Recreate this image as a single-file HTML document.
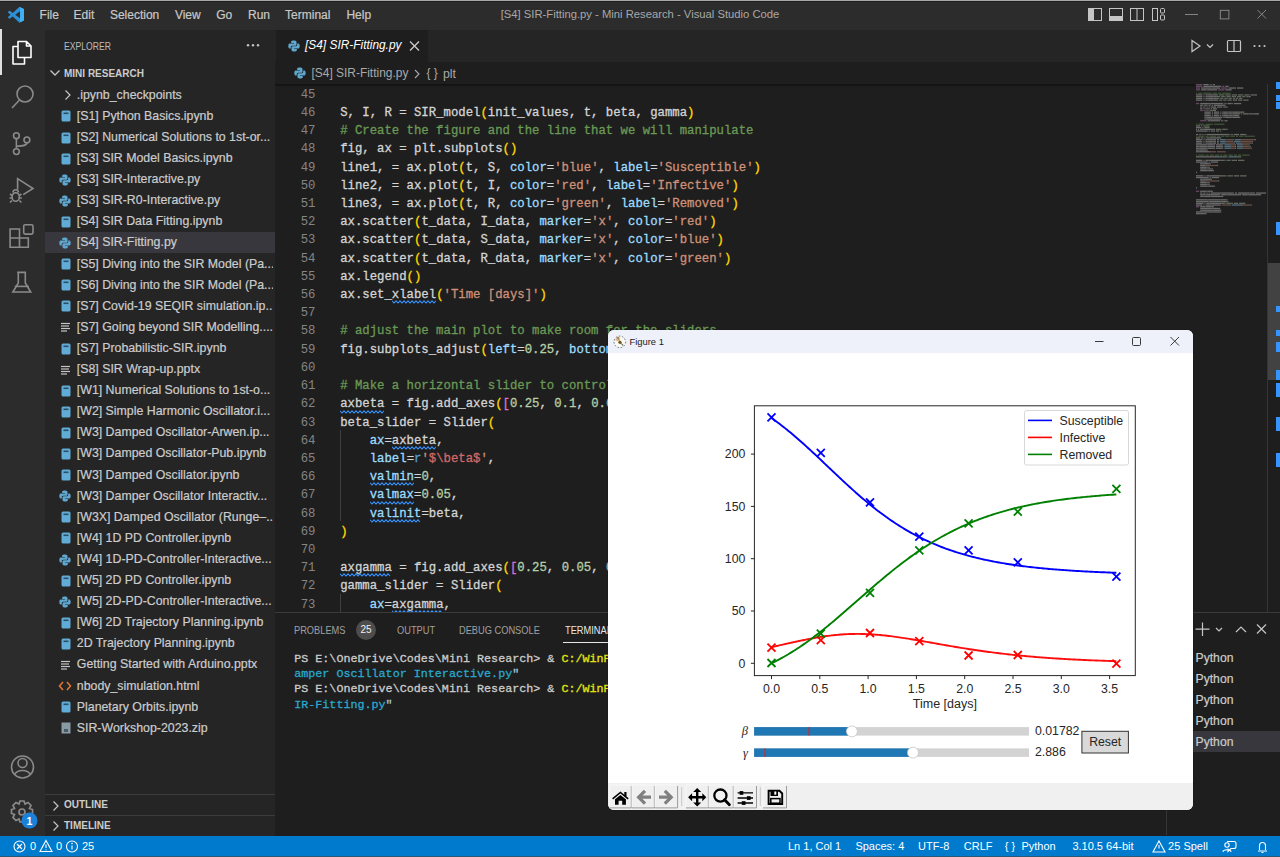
<!DOCTYPE html><html><head><meta charset="utf-8"><style>
*{box-sizing:border-box;margin:0;padding:0}
html,body{width:1280px;height:857px;overflow:hidden;background:#1e1e1e;font-family:"Liberation Sans",sans-serif}
.a{position:absolute}
.t{position:absolute;white-space:pre;line-height:1}
.mono{font-family:"Liberation Mono",monospace}
.b3{-webkit-text-stroke:0.3px currentColor}
.b2{-webkit-text-stroke:0.2px currentColor}
</style></head><body>
<div class="a" style="left:0;top:0;width:1280px;height:30px;background:#2c2c2c"></div>
<div class="a" style="left:0;top:0;width:1280px;height:1px;background:#a8a8a8"></div>
<div class="a" style="left:0;top:1px;width:1280px;height:1px;background:#1e1e1e;border-radius:4px 4px 0 0"></div>
<svg class="a" style="left:8px;top:7px" width="16" height="15.5" viewBox="0 0 100 100" preserveAspectRatio="none">
<path d="M96.46 10.8 L75.86 0.87 C73.48 -0.28 70.63 0.2 68.76 2.07 L29.36 38 L12.2 24.98 C10.6 23.77 8.36 23.87 6.88 25.22 L1.37 30.23 C-0.44 31.88 -0.44 34.74 1.36 36.39 L16.24 49.97 L1.36 63.55 C-0.44 65.2 -0.44 68.06 1.37 69.71 L6.88 74.72 C8.36 76.07 10.6 76.17 12.2 74.96 L29.36 61.94 L68.76 97.87 C70.63 99.74 73.48 100.22 75.86 99.07 L96.46 89.14 C98.62 88.1 100 85.91 100 83.51 V16.43 C100 14.03 98.62 11.84 96.46 10.8 Z M75.01 72.7 L45.11 49.97 L75.01 27.24 Z" fill="#2d8fd6" fill-rule="evenodd"/>
<path d="M75.86 0.87 L96.46 10.8 C98.62 11.84 100 14.03 100 16.43 V83.51 C100 85.91 98.62 88.1 96.46 89.14 L75.86 99.07 C73.48 100.22 70.63 99.74 68.76 97.87 C71 99 75 98 75 94 V6 C75 2 71 1 68.76 2.07 C70.63 0.2 73.48 -0.28 75.86 0.87 Z" fill="#3fb0f2"/>
</svg>
<div class="t b2" style="left:39.6px;top:8.5px;font-size:12px;color:#c8c8c8">File</div>
<div class="t b2" style="left:73.60000000000001px;top:8.5px;font-size:12px;color:#c8c8c8">Edit</div>
<div class="t b2" style="left:109.9px;top:8.5px;font-size:12px;color:#c8c8c8">Selection</div>
<div class="t b2" style="left:174.89999999999998px;top:8.5px;font-size:12px;color:#c8c8c8">View</div>
<div class="t b2" style="left:216.2px;top:8.5px;font-size:12px;color:#c8c8c8">Go</div>
<div class="t b2" style="left:248.0px;top:8.5px;font-size:12px;color:#c8c8c8">Run</div>
<div class="t b2" style="left:285.09999999999997px;top:8.5px;font-size:12px;color:#c8c8c8">Terminal</div>
<div class="t b2" style="left:346.4px;top:8.5px;font-size:12px;color:#c8c8c8">Help</div>
<div class="t" style="left:0;width:1280px;text-align:center;top:9px;font-size:11.25px;color:#a8a8a8">[S4] SIR-Fitting.py - Mini Research - Visual Studio Code</div>
<svg class="a" style="left:1080px;top:0" width="200" height="30">
<g fill="none" stroke="#c5c5c5" stroke-width="1">
<rect x="8.5" y="8.5" width="13" height="12"/><rect x="9" y="9" width="5" height="11" fill="#c5c5c5" stroke="none"/>
<rect x="29.5" y="8.5" width="13" height="12"/><rect x="30" y="16" width="12" height="4" fill="#c5c5c5" stroke="none"/>
<rect x="50.5" y="8.5" width="13" height="12"/><line x1="57" y1="9" x2="57" y2="20"/>
<rect x="72.5" y="8.5" width="5" height="12"/><rect x="80.5" y="8.5" width="4" height="4.5" rx="1"/><rect x="80.5" y="15" width="4" height="5" rx="1"/>
<g stroke="#8e8e8e" stroke-width="0.9"><line x1="105" y1="14.5" x2="118" y2="14.5"/>
<rect x="140.3" y="10.3" width="8.6" height="8.6"/>
<line x1="177.5" y1="10" x2="186" y2="18.5"/><line x1="186" y1="10" x2="177.5" y2="18.5"/></g>
</g></svg>
<div class="a" style="left:0;top:30px;width:45px;height:806px;background:#2c2c2c"></div>
<div class="a" style="left:0;top:29px;width:1.6px;height:46px;background:#e0e0e0"></div>
<svg class="a" style="left:0;top:30px" width="45" height="806">
<g fill="none" stroke="#ffffff" stroke-width="1.6" stroke-linejoin="round">
<path d="M18 11.5 H26.5 L31 16 V27.5 H18 Z M26.5 11.5 V16 H31"/>
<path d="M18 16.5 H13 V34 H24.5 V27.5"/>
</g>
<g fill="none" stroke="#8a8a8a" stroke-width="1.6">
<circle cx="25" cy="64" r="8"/><line x1="19.5" y1="70" x2="12" y2="78"/>
<circle cx="16.4" cy="105.7" r="2.9"/><circle cx="16.4" cy="121.6" r="2.9"/><circle cx="26.9" cy="109.9" r="2.9"/>
<path d="M16.4 108.6 V118.7 M26.9 112.8 C26.9 115.5 24 116 16.4 116.2"/>
<path d="M17.6 159.4 V148.7 L33 158.5 L23.2 164.6"/><ellipse cx="15.7" cy="166.9" rx="3.6" ry="4.3"/><path d="M13 162.5 a2.7 2.7 0 0 1 5.4 0 M12 165.5 l-2 -1.5 M19.4 165.5 l2 -1.5 M12 168 h-2.5 M19.4 168 h2.5 M12 170.5 l-2 2 M19.4 170.5 l2 2"/>
<path d="M10.1 199 H19.5 V208 H28.3 V217.2 H10.1 Z M10.1 208 H19.5 V217.2"/><rect x="23.7" y="194.8" width="9.3" height="9.3" rx="1.5"/>
<path d="M17.1 242.4 H26 M18.3 242.4 V253 L12.9 262 H30.7 L25.3 253 V242.4"/><path d="M14.8 256.4 H28.8"/>
<circle cx="22.5" cy="737" r="11"/><circle cx="22.5" cy="733" r="4.5"/><path d="M14.5 745 C17 739 28 739 30.5 745"/>
</g>
<g fill="none" stroke="#8a8a8a" stroke-width="1.7">
<circle cx="22" cy="782" r="3"/>
<path d="M20 771 h4 l1 3 l3 -1.5 l3 3 l-1.5 3 l3 1 v4 l-3 1 l1.5 3 l-3 3 l-3 -1.5 l-1 3 h-4 l-1 -3 l-3 1.5 l-3 -3 l1.5 -3 l-3 -1 v-4 l3 -1 l-1.5 -3 l3 -3 l3 1.5 z"/>
</g>
<circle cx="29.5" cy="790.5" r="8" fill="#1b80d8"/>
<text x="29.5" y="794.5" font-size="10.5" fill="#fff" text-anchor="middle" font-family="Liberation Sans" font-weight="700">1</text>
</svg>
<div class="a" style="left:45px;top:30px;width:230px;height:806px;background:#252526"></div>
<div class="t" style="left:64px;top:41.5px;font-size:10.3px;color:#bbbbbb;transform:scaleX(0.84);transform-origin:0 0">EXPLORER</div>
<svg class="a" style="left:240px;top:40px" width="22" height="10"><g fill="#c5c5c5"><circle cx="8" cy="5.3" r="1.2"/><circle cx="13" cy="5.3" r="1.2"/><circle cx="18" cy="5.3" r="1.2"/></g></svg>
<svg class="a" style="left:48px;top:66px" width="14" height="14"><path d="M2.5 4.5 L7 9 L11.5 4.5" fill="none" stroke="#c5c5c5" stroke-width="1.3"/></svg>
<div class="t" style="left:64px;top:68.5px;font-size:10px;font-weight:700;color:#cccccc">MINI RESEARCH</div>
<svg class="a" style="left:62px;top:89.3px" width="12" height="12"><path d="M3.5 1.5 L8 6 L3.5 10.5" fill="none" stroke="#c5c5c5" stroke-width="1.2"/></svg>
<div class="t b2" style="left:76.8px;top:86.7px;padding:2px 0;font-size:12.35px;color:#cccccc;width:196px;overflow:hidden">.ipynb_checkpoints</div>
<svg class="a" style="left:60.7px;top:110.4px" width="11" height="12"><rect x="0.5" y="0.5" width="9" height="11" rx="1.5" fill="#61acd6"/><rect x="2.5" y="2.5" width="5" height="1.6" fill="#2b4f66"/></svg>
<div class="t b2" style="left:76.8px;top:107.8px;padding:2px 0;font-size:12.35px;color:#cccccc;width:196px;overflow:hidden">[S1] Python Basics.ipynb</div>
<svg class="a" style="left:60.7px;top:131.5px" width="11" height="12"><rect x="0.5" y="0.5" width="9" height="11" rx="1.5" fill="#61acd6"/><rect x="2.5" y="2.5" width="5" height="1.6" fill="#2b4f66"/></svg>
<div class="t b2" style="left:76.8px;top:128.9px;padding:2px 0;font-size:12.35px;color:#cccccc;width:196px;overflow:hidden">[S2] Numerical Solutions to 1st-or...</div>
<svg class="a" style="left:60.7px;top:152.6px" width="11" height="12"><rect x="0.5" y="0.5" width="9" height="11" rx="1.5" fill="#61acd6"/><rect x="2.5" y="2.5" width="5" height="1.6" fill="#2b4f66"/></svg>
<div class="t b2" style="left:76.8px;top:150.0px;padding:2px 0;font-size:12.35px;color:#cccccc;width:196px;overflow:hidden">[S3] SIR Model Basics.ipynb</div>
<svg class="a" style="left:59px;top:173.7px" width="12" height="12"><g fill="#5fa7cf"><path d="M5.8 0.5 C3 0.5 3.2 1.7 3.2 1.7 V3 H6 V3.5 H2 C2 3.5 0.3 3.3 0.3 6 C0.3 8.7 1.8 8.6 1.8 8.6 H2.8 V7.3 C2.8 7.3 2.7 5.8 4.3 5.8 H7 C7 5.8 8.5 5.8 8.5 4.4 V2 C8.5 2 8.7 0.5 5.8 0.5 Z"/><path d="M6.2 11.5 C9 11.5 8.8 10.3 8.8 10.3 V9 H6 V8.5 H10 C10 8.5 11.7 8.7 11.7 6 C11.7 3.3 10.2 3.4 10.2 3.4 H9.2 V4.7 C9.2 4.7 9.3 6.2 7.7 6.2 H5 C5 6.2 3.5 6.2 3.5 7.6 V10 C3.5 10 3.3 11.5 6.2 11.5 Z"/></g></svg>
<div class="t b2" style="left:76.8px;top:171.1px;padding:2px 0;font-size:12.35px;color:#cccccc;width:196px;overflow:hidden">[S3] SIR-Interactive.py</div>
<svg class="a" style="left:59px;top:194.8px" width="12" height="12"><g fill="#5fa7cf"><path d="M5.8 0.5 C3 0.5 3.2 1.7 3.2 1.7 V3 H6 V3.5 H2 C2 3.5 0.3 3.3 0.3 6 C0.3 8.7 1.8 8.6 1.8 8.6 H2.8 V7.3 C2.8 7.3 2.7 5.8 4.3 5.8 H7 C7 5.8 8.5 5.8 8.5 4.4 V2 C8.5 2 8.7 0.5 5.8 0.5 Z"/><path d="M6.2 11.5 C9 11.5 8.8 10.3 8.8 10.3 V9 H6 V8.5 H10 C10 8.5 11.7 8.7 11.7 6 C11.7 3.3 10.2 3.4 10.2 3.4 H9.2 V4.7 C9.2 4.7 9.3 6.2 7.7 6.2 H5 C5 6.2 3.5 6.2 3.5 7.6 V10 C3.5 10 3.3 11.5 6.2 11.5 Z"/></g></svg>
<div class="t b2" style="left:76.8px;top:192.2px;padding:2px 0;font-size:12.35px;color:#cccccc;width:196px;overflow:hidden">[S3] SIR-R0-Interactive.py</div>
<svg class="a" style="left:60.7px;top:215.9px" width="11" height="12"><rect x="0.5" y="0.5" width="9" height="11" rx="1.5" fill="#61acd6"/><rect x="2.5" y="2.5" width="5" height="1.6" fill="#2b4f66"/></svg>
<div class="t b2" style="left:76.8px;top:213.3px;padding:2px 0;font-size:12.35px;color:#cccccc;width:196px;overflow:hidden">[S4] SIR Data Fitting.ipynb</div>
<div class="a" style="left:45px;top:232.4px;width:230px;height:21.1px;background:#37373d"></div>
<svg class="a" style="left:59px;top:237.0px" width="12" height="12"><g fill="#5fa7cf"><path d="M5.8 0.5 C3 0.5 3.2 1.7 3.2 1.7 V3 H6 V3.5 H2 C2 3.5 0.3 3.3 0.3 6 C0.3 8.7 1.8 8.6 1.8 8.6 H2.8 V7.3 C2.8 7.3 2.7 5.8 4.3 5.8 H7 C7 5.8 8.5 5.8 8.5 4.4 V2 C8.5 2 8.7 0.5 5.8 0.5 Z"/><path d="M6.2 11.5 C9 11.5 8.8 10.3 8.8 10.3 V9 H6 V8.5 H10 C10 8.5 11.7 8.7 11.7 6 C11.7 3.3 10.2 3.4 10.2 3.4 H9.2 V4.7 C9.2 4.7 9.3 6.2 7.7 6.2 H5 C5 6.2 3.5 6.2 3.5 7.6 V10 C3.5 10 3.3 11.5 6.2 11.5 Z"/></g></svg>
<div class="t b2" style="left:76.8px;top:234.4px;padding:2px 0;font-size:12.35px;color:#cccccc;width:196px;overflow:hidden">[S4] SIR-Fitting.py</div>
<svg class="a" style="left:60.7px;top:258.1px" width="11" height="12"><rect x="0.5" y="0.5" width="9" height="11" rx="1.5" fill="#61acd6"/><rect x="2.5" y="2.5" width="5" height="1.6" fill="#2b4f66"/></svg>
<div class="t b2" style="left:76.8px;top:255.5px;padding:2px 0;font-size:12.35px;color:#cccccc;width:196px;overflow:hidden">[S5] Diving into the SIR Model (Pa...</div>
<svg class="a" style="left:60.7px;top:279.2px" width="11" height="12"><rect x="0.5" y="0.5" width="9" height="11" rx="1.5" fill="#61acd6"/><rect x="2.5" y="2.5" width="5" height="1.6" fill="#2b4f66"/></svg>
<div class="t b2" style="left:76.8px;top:276.6px;padding:2px 0;font-size:12.35px;color:#cccccc;width:196px;overflow:hidden">[S6] Diving into the SIR Model (Pa...</div>
<svg class="a" style="left:60.7px;top:300.3px" width="11" height="12"><rect x="0.5" y="0.5" width="9" height="11" rx="1.5" fill="#61acd6"/><rect x="2.5" y="2.5" width="5" height="1.6" fill="#2b4f66"/></svg>
<div class="t b2" style="left:76.8px;top:297.7px;padding:2px 0;font-size:12.35px;color:#cccccc;width:196px;overflow:hidden">[S7] Covid-19 SEQIR simulation.ip...</div>
<svg class="a" style="left:60px;top:321.4px" width="12" height="12"><g stroke="#c5c5c5" stroke-width="1.2"><line x1="1" y1="2.5" x2="10" y2="2.5"/><line x1="1" y1="5" x2="9" y2="5"/><line x1="1" y1="7.5" x2="10" y2="7.5"/><line x1="1" y1="10" x2="7" y2="10"/></g></svg>
<div class="t b2" style="left:76.8px;top:318.8px;padding:2px 0;font-size:12.35px;color:#cccccc;width:196px;overflow:hidden">[S7] Going beyond SIR Modelling....</div>
<svg class="a" style="left:60.7px;top:342.5px" width="11" height="12"><rect x="0.5" y="0.5" width="9" height="11" rx="1.5" fill="#61acd6"/><rect x="2.5" y="2.5" width="5" height="1.6" fill="#2b4f66"/></svg>
<div class="t b2" style="left:76.8px;top:339.9px;padding:2px 0;font-size:12.35px;color:#cccccc;width:196px;overflow:hidden">[S7] Probabilistic-SIR.ipynb</div>
<svg class="a" style="left:60px;top:363.6px" width="12" height="12"><g stroke="#c5c5c5" stroke-width="1.2"><line x1="1" y1="2.5" x2="10" y2="2.5"/><line x1="1" y1="5" x2="9" y2="5"/><line x1="1" y1="7.5" x2="10" y2="7.5"/><line x1="1" y1="10" x2="7" y2="10"/></g></svg>
<div class="t b2" style="left:76.8px;top:361.0px;padding:2px 0;font-size:12.35px;color:#cccccc;width:196px;overflow:hidden">[S8] SIR Wrap-up.pptx</div>
<svg class="a" style="left:60.7px;top:384.7px" width="11" height="12"><rect x="0.5" y="0.5" width="9" height="11" rx="1.5" fill="#61acd6"/><rect x="2.5" y="2.5" width="5" height="1.6" fill="#2b4f66"/></svg>
<div class="t b2" style="left:76.8px;top:382.1px;padding:2px 0;font-size:12.35px;color:#cccccc;width:196px;overflow:hidden">[W1] Numerical Solutions to 1st-o...</div>
<svg class="a" style="left:60.7px;top:405.8px" width="11" height="12"><rect x="0.5" y="0.5" width="9" height="11" rx="1.5" fill="#61acd6"/><rect x="2.5" y="2.5" width="5" height="1.6" fill="#2b4f66"/></svg>
<div class="t b2" style="left:76.8px;top:403.2px;padding:2px 0;font-size:12.35px;color:#cccccc;width:196px;overflow:hidden">[W2] Simple Harmonic Oscillator.i...</div>
<svg class="a" style="left:60.7px;top:426.9px" width="11" height="12"><rect x="0.5" y="0.5" width="9" height="11" rx="1.5" fill="#61acd6"/><rect x="2.5" y="2.5" width="5" height="1.6" fill="#2b4f66"/></svg>
<div class="t b2" style="left:76.8px;top:424.3px;padding:2px 0;font-size:12.35px;color:#cccccc;width:196px;overflow:hidden">[W3] Damped Oscillator-Arwen.ip...</div>
<svg class="a" style="left:60.7px;top:448.0px" width="11" height="12"><rect x="0.5" y="0.5" width="9" height="11" rx="1.5" fill="#61acd6"/><rect x="2.5" y="2.5" width="5" height="1.6" fill="#2b4f66"/></svg>
<div class="t b2" style="left:76.8px;top:445.4px;padding:2px 0;font-size:12.35px;color:#cccccc;width:196px;overflow:hidden">[W3] Damped Oscillator-Pub.ipynb</div>
<svg class="a" style="left:60.7px;top:469.1px" width="11" height="12"><rect x="0.5" y="0.5" width="9" height="11" rx="1.5" fill="#61acd6"/><rect x="2.5" y="2.5" width="5" height="1.6" fill="#2b4f66"/></svg>
<div class="t b2" style="left:76.8px;top:466.5px;padding:2px 0;font-size:12.35px;color:#cccccc;width:196px;overflow:hidden">[W3] Damped Oscillator.ipynb</div>
<svg class="a" style="left:59px;top:490.2px" width="12" height="12"><g fill="#5fa7cf"><path d="M5.8 0.5 C3 0.5 3.2 1.7 3.2 1.7 V3 H6 V3.5 H2 C2 3.5 0.3 3.3 0.3 6 C0.3 8.7 1.8 8.6 1.8 8.6 H2.8 V7.3 C2.8 7.3 2.7 5.8 4.3 5.8 H7 C7 5.8 8.5 5.8 8.5 4.4 V2 C8.5 2 8.7 0.5 5.8 0.5 Z"/><path d="M6.2 11.5 C9 11.5 8.8 10.3 8.8 10.3 V9 H6 V8.5 H10 C10 8.5 11.7 8.7 11.7 6 C11.7 3.3 10.2 3.4 10.2 3.4 H9.2 V4.7 C9.2 4.7 9.3 6.2 7.7 6.2 H5 C5 6.2 3.5 6.2 3.5 7.6 V10 C3.5 10 3.3 11.5 6.2 11.5 Z"/></g></svg>
<div class="t b2" style="left:76.8px;top:487.6px;padding:2px 0;font-size:12.35px;color:#cccccc;width:196px;overflow:hidden">[W3] Damper Oscillator Interactiv...</div>
<svg class="a" style="left:60.7px;top:511.3px" width="11" height="12"><rect x="0.5" y="0.5" width="9" height="11" rx="1.5" fill="#61acd6"/><rect x="2.5" y="2.5" width="5" height="1.6" fill="#2b4f66"/></svg>
<div class="t b2" style="left:76.8px;top:508.7px;padding:2px 0;font-size:12.35px;color:#cccccc;width:196px;overflow:hidden">[W3X] Damped Oscillator (Runge–...</div>
<svg class="a" style="left:60.7px;top:532.4px" width="11" height="12"><rect x="0.5" y="0.5" width="9" height="11" rx="1.5" fill="#61acd6"/><rect x="2.5" y="2.5" width="5" height="1.6" fill="#2b4f66"/></svg>
<div class="t b2" style="left:76.8px;top:529.8px;padding:2px 0;font-size:12.35px;color:#cccccc;width:196px;overflow:hidden">[W4] 1D PD Controller.ipynb</div>
<svg class="a" style="left:59px;top:553.5px" width="12" height="12"><g fill="#5fa7cf"><path d="M5.8 0.5 C3 0.5 3.2 1.7 3.2 1.7 V3 H6 V3.5 H2 C2 3.5 0.3 3.3 0.3 6 C0.3 8.7 1.8 8.6 1.8 8.6 H2.8 V7.3 C2.8 7.3 2.7 5.8 4.3 5.8 H7 C7 5.8 8.5 5.8 8.5 4.4 V2 C8.5 2 8.7 0.5 5.8 0.5 Z"/><path d="M6.2 11.5 C9 11.5 8.8 10.3 8.8 10.3 V9 H6 V8.5 H10 C10 8.5 11.7 8.7 11.7 6 C11.7 3.3 10.2 3.4 10.2 3.4 H9.2 V4.7 C9.2 4.7 9.3 6.2 7.7 6.2 H5 C5 6.2 3.5 6.2 3.5 7.6 V10 C3.5 10 3.3 11.5 6.2 11.5 Z"/></g></svg>
<div class="t b2" style="left:76.8px;top:550.9px;padding:2px 0;font-size:12.35px;color:#cccccc;width:196px;overflow:hidden">[W4] 1D-PD-Controller-Interactive...</div>
<svg class="a" style="left:60.7px;top:574.6px" width="11" height="12"><rect x="0.5" y="0.5" width="9" height="11" rx="1.5" fill="#61acd6"/><rect x="2.5" y="2.5" width="5" height="1.6" fill="#2b4f66"/></svg>
<div class="t b2" style="left:76.8px;top:572.0px;padding:2px 0;font-size:12.35px;color:#cccccc;width:196px;overflow:hidden">[W5] 2D PD Controller.ipynb</div>
<svg class="a" style="left:59px;top:595.7px" width="12" height="12"><g fill="#5fa7cf"><path d="M5.8 0.5 C3 0.5 3.2 1.7 3.2 1.7 V3 H6 V3.5 H2 C2 3.5 0.3 3.3 0.3 6 C0.3 8.7 1.8 8.6 1.8 8.6 H2.8 V7.3 C2.8 7.3 2.7 5.8 4.3 5.8 H7 C7 5.8 8.5 5.8 8.5 4.4 V2 C8.5 2 8.7 0.5 5.8 0.5 Z"/><path d="M6.2 11.5 C9 11.5 8.8 10.3 8.8 10.3 V9 H6 V8.5 H10 C10 8.5 11.7 8.7 11.7 6 C11.7 3.3 10.2 3.4 10.2 3.4 H9.2 V4.7 C9.2 4.7 9.3 6.2 7.7 6.2 H5 C5 6.2 3.5 6.2 3.5 7.6 V10 C3.5 10 3.3 11.5 6.2 11.5 Z"/></g></svg>
<div class="t b2" style="left:76.8px;top:593.1px;padding:2px 0;font-size:12.35px;color:#cccccc;width:196px;overflow:hidden">[W5] 2D-PD-Controller-Interactive...</div>
<svg class="a" style="left:60.7px;top:616.8px" width="11" height="12"><rect x="0.5" y="0.5" width="9" height="11" rx="1.5" fill="#61acd6"/><rect x="2.5" y="2.5" width="5" height="1.6" fill="#2b4f66"/></svg>
<div class="t b2" style="left:76.8px;top:614.2px;padding:2px 0;font-size:12.35px;color:#cccccc;width:196px;overflow:hidden">[W6] 2D Trajectory Planning.ipynb</div>
<svg class="a" style="left:60.7px;top:637.9px" width="11" height="12"><rect x="0.5" y="0.5" width="9" height="11" rx="1.5" fill="#61acd6"/><rect x="2.5" y="2.5" width="5" height="1.6" fill="#2b4f66"/></svg>
<div class="t b2" style="left:76.8px;top:635.3px;padding:2px 0;font-size:12.35px;color:#cccccc;width:196px;overflow:hidden">2D Trajectory Planning.ipynb</div>
<svg class="a" style="left:60px;top:659.0px" width="12" height="12"><g stroke="#c5c5c5" stroke-width="1.2"><line x1="1" y1="2.5" x2="10" y2="2.5"/><line x1="1" y1="5" x2="9" y2="5"/><line x1="1" y1="7.5" x2="10" y2="7.5"/><line x1="1" y1="10" x2="7" y2="10"/></g></svg>
<div class="t b2" style="left:76.8px;top:656.4px;padding:2px 0;font-size:12.35px;color:#cccccc;width:196px;overflow:hidden">Getting Started with Arduino.pptx</div>
<svg class="a" style="left:58px;top:680.1px" width="14" height="12"><path d="M5 2 L1.5 6 L5 10 M9 2 L12.5 6 L9 10" fill="none" stroke="#e37933" stroke-width="1.5"/></svg>
<div class="t b2" style="left:76.8px;top:677.5px;padding:2px 0;font-size:12.35px;color:#cccccc;width:196px;overflow:hidden">nbody_simulation.html</div>
<svg class="a" style="left:60.7px;top:701.2px" width="11" height="12"><rect x="0.5" y="0.5" width="9" height="11" rx="1.5" fill="#61acd6"/><rect x="2.5" y="2.5" width="5" height="1.6" fill="#2b4f66"/></svg>
<div class="t b2" style="left:76.8px;top:698.6px;padding:2px 0;font-size:12.35px;color:#cccccc;width:196px;overflow:hidden">Planetary Orbits.ipynb</div>
<svg class="a" style="left:61px;top:722.3px" width="11" height="12"><rect x="0.5" y="0.5" width="9" height="11" fill="#8a9aa5"/><rect x="3" y="7" width="4" height="3" fill="#4a5a65"/></svg>
<div class="t b2" style="left:76.8px;top:719.7px;padding:2px 0;font-size:12.35px;color:#cccccc;width:196px;overflow:hidden">SIR-Workshop-2023.zip</div>
<div class="a" style="left:45px;top:794px;width:230px;height:1px;background:#3c3c3c"></div>
<div class="a" style="left:45px;top:815px;width:230px;height:1px;background:#3c3c3c"></div>
<svg class="a" style="left:50px;top:798.5px" width="12" height="14"><path d="M3.5 2.5 L8 7 L3.5 11.5" fill="none" stroke="#c5c5c5" stroke-width="1.2"/></svg>
<div class="t" style="left:64px;top:800.3px;font-size:10px;font-weight:700;color:#cccccc">OUTLINE</div>
<svg class="a" style="left:50px;top:819.3px" width="12" height="14"><path d="M3.5 2.5 L8 7 L3.5 11.5" fill="none" stroke="#c5c5c5" stroke-width="1.2"/></svg>
<div class="t" style="left:64px;top:821.0999999999999px;font-size:10px;font-weight:700;color:#cccccc">TIMELINE</div>
<div class="a" style="left:275px;top:30px;width:1005px;height:32px;background:#252526"></div>
<div class="a" style="left:276px;top:30px;width:152px;height:32px;background:#1e1e1e"></div>
<svg class="a" style="left:288px;top:40px" width="12" height="12"><g fill="#5fa7cf"><path d="M5.8 0.5 C3 0.5 3.2 1.7 3.2 1.7 V3 H6 V3.5 H2 C2 3.5 0.3 3.3 0.3 6 C0.3 8.7 1.8 8.6 1.8 8.6 H2.8 V7.3 C2.8 7.3 2.7 5.8 4.3 5.8 H7 C7 5.8 8.5 5.8 8.5 4.4 V2 C8.5 2 8.7 0.5 5.8 0.5 Z"/><path d="M6.2 11.5 C9 11.5 8.8 10.3 8.8 10.3 V9 H6 V8.5 H10 C10 8.5 11.7 8.7 11.7 6 C11.7 3.3 10.2 3.4 10.2 3.4 H9.2 V4.7 C9.2 4.7 9.3 6.2 7.7 6.2 H5 C5 6.2 3.5 6.2 3.5 7.6 V10 C3.5 10 3.3 11.5 6.2 11.5 Z"/></g></svg>
<div class="t" style="left:305px;top:39.5px;font-size:11.9px;font-style:italic;color:#ffffff">[S4] SIR-Fitting.py</div>
<svg class="a" style="left:407px;top:40px" width="14" height="12"><path d="M3 1.5 L12 10.5 M12 1.5 L3 10.5" stroke="#cccccc" stroke-width="1.3"/></svg>
<svg class="a" style="left:1180px;top:36px" width="100" height="20"><g fill="none" stroke="#c5c5c5" stroke-width="1.2">
<path d="M12 4.5 L20 10 L12 15.5 Z"/><path d="M27 8.5 L30 11.5 L33 8.5"/>
<rect x="47.5" y="4.5" width="13" height="11" rx="1"/><line x1="54" y1="4.5" x2="54" y2="15.5"/>
</g><g fill="#c5c5c5"><circle cx="74.5" cy="10" r="1.1"/><circle cx="79.5" cy="10" r="1.1"/><circle cx="84.5" cy="10" r="1.1"/></g></svg>
<div class="a" style="left:275px;top:62px;width:1005px;height:22px;background:#1e1e1e"></div>
<svg class="a" style="left:294px;top:67px" width="12" height="12"><g fill="#5fa7cf"><path d="M5.8 0.5 C3 0.5 3.2 1.7 3.2 1.7 V3 H6 V3.5 H2 C2 3.5 0.3 3.3 0.3 6 C0.3 8.7 1.8 8.6 1.8 8.6 H2.8 V7.3 C2.8 7.3 2.7 5.8 4.3 5.8 H7 C7 5.8 8.5 5.8 8.5 4.4 V2 C8.5 2 8.7 0.5 5.8 0.5 Z"/><path d="M6.2 11.5 C9 11.5 8.8 10.3 8.8 10.3 V9 H6 V8.5 H10 C10 8.5 11.7 8.7 11.7 6 C11.7 3.3 10.2 3.4 10.2 3.4 H9.2 V4.7 C9.2 4.7 9.3 6.2 7.7 6.2 H5 C5 6.2 3.5 6.2 3.5 7.6 V10 C3.5 10 3.3 11.5 6.2 11.5 Z"/></g></svg>
<div class="t" style="left:311.5px;top:67.5px;font-size:11.95px;color:#a9a9a9">[S4] SIR-Fitting.py</div>
<svg class="a" style="left:412px;top:68px" width="10" height="12"><path d="M3 2 L7 6 L3 10" fill="none" stroke="#a9a9a9" stroke-width="1.1"/></svg>
<div class="t" style="left:426.5px;top:68px;font-size:11.95px;color:#a9a9a9">{ }</div>
<div class="t" style="left:443px;top:68px;font-size:12.3px;color:#a9a9a9">plt</div>
<div class="a" style="left:275px;top:84px;width:920px;height:3px;background:linear-gradient(#101010,#1e1e1e)"></div>
<div class="a" style="left:275px;top:87px;width:920px;height:525px;overflow:hidden">
<div class="t mono" style="left:0;width:40.5px;text-align:right;top:1.80px;font-size:12.31px;color:#858585">45</div>
<div class="t mono" style="left:65.20px;top:1.80px;font-size:12.31px"></div>
<div class="t mono" style="left:0;width:40.5px;text-align:right;top:20.01px;font-size:12.31px;color:#858585">46</div>
<div class="t mono" style="left:65.20px;top:20.01px;font-size:12.31px"><span class="b3" style="color:#d4d4d4">S, I, R = SIR_model</span><span class="b3" style="color:#ffd700">(</span><span class="b3" style="color:#d4d4d4">init_values, t, beta, gamma</span><span class="b3" style="color:#ffd700">)</span></div>
<div class="t mono" style="left:0;width:40.5px;text-align:right;top:38.21px;font-size:12.31px;color:#858585">47</div>
<div class="t mono" style="left:65.20px;top:38.21px;font-size:12.31px"><span class="b3" style="color:#6a9955"># Create the figure and the line that we will manipulate</span></div>
<div class="t mono" style="left:0;width:40.5px;text-align:right;top:56.42px;font-size:12.31px;color:#858585">48</div>
<div class="t mono" style="left:65.20px;top:56.42px;font-size:12.31px"><span class="b3" style="color:#d4d4d4">fig, ax = plt.subplots</span><span class="b3" style="color:#ffd700">()</span></div>
<div class="t mono" style="left:0;width:40.5px;text-align:right;top:74.63px;font-size:12.31px;color:#858585">49</div>
<div class="t mono" style="left:65.20px;top:74.63px;font-size:12.31px"><span class="b3" style="color:#d4d4d4">line1, = ax.plot</span><span class="b3" style="color:#ffd700">(</span><span class="b3" style="color:#d4d4d4">t, S, </span><span class="b3" style="color:#9cdcfe">color</span><span class="b3" style="color:#d4d4d4">=</span><span class="b3" style="color:#ce9178">&#x27;blue&#x27;</span><span class="b3" style="color:#d4d4d4">, </span><span class="b3" style="color:#9cdcfe">label</span><span class="b3" style="color:#d4d4d4">=</span><span class="b3" style="color:#ce9178">&#x27;Susceptible&#x27;</span><span class="b3" style="color:#ffd700">)</span></div>
<div class="t mono" style="left:0;width:40.5px;text-align:right;top:92.83px;font-size:12.31px;color:#858585">50</div>
<div class="t mono" style="left:65.20px;top:92.83px;font-size:12.31px"><span class="b3" style="color:#d4d4d4">line2, = ax.plot</span><span class="b3" style="color:#ffd700">(</span><span class="b3" style="color:#d4d4d4">t, I, </span><span class="b3" style="color:#9cdcfe">color</span><span class="b3" style="color:#d4d4d4">=</span><span class="b3" style="color:#ce9178">&#x27;red&#x27;</span><span class="b3" style="color:#d4d4d4">, </span><span class="b3" style="color:#9cdcfe">label</span><span class="b3" style="color:#d4d4d4">=</span><span class="b3" style="color:#ce9178">&#x27;Infective&#x27;</span><span class="b3" style="color:#ffd700">)</span></div>
<div class="t mono" style="left:0;width:40.5px;text-align:right;top:111.04px;font-size:12.31px;color:#858585">51</div>
<div class="t mono" style="left:65.20px;top:111.04px;font-size:12.31px"><span class="b3" style="color:#d4d4d4">line3, = ax.plot</span><span class="b3" style="color:#ffd700">(</span><span class="b3" style="color:#d4d4d4">t, R, </span><span class="b3" style="color:#9cdcfe">color</span><span class="b3" style="color:#d4d4d4">=</span><span class="b3" style="color:#ce9178">&#x27;green&#x27;</span><span class="b3" style="color:#d4d4d4">, </span><span class="b3" style="color:#9cdcfe">label</span><span class="b3" style="color:#d4d4d4">=</span><span class="b3" style="color:#ce9178">&#x27;Removed&#x27;</span><span class="b3" style="color:#ffd700">)</span></div>
<div class="t mono" style="left:0;width:40.5px;text-align:right;top:129.25px;font-size:12.31px;color:#858585">52</div>
<div class="t mono" style="left:65.20px;top:129.25px;font-size:12.31px"><span class="b3" style="color:#d4d4d4">ax.scatter</span><span class="b3" style="color:#ffd700">(</span><span class="b3" style="color:#d4d4d4">t_data, I_data, </span><span class="b3" style="color:#9cdcfe">marker</span><span class="b3" style="color:#d4d4d4">=</span><span class="b3" style="color:#ce9178">&#x27;x&#x27;</span><span class="b3" style="color:#d4d4d4">, </span><span class="b3" style="color:#9cdcfe">color</span><span class="b3" style="color:#d4d4d4">=</span><span class="b3" style="color:#ce9178">&#x27;red&#x27;</span><span class="b3" style="color:#ffd700">)</span></div>
<div class="t mono" style="left:0;width:40.5px;text-align:right;top:147.46px;font-size:12.31px;color:#858585">53</div>
<div class="t mono" style="left:65.20px;top:147.46px;font-size:12.31px"><span class="b3" style="color:#d4d4d4">ax.scatter</span><span class="b3" style="color:#ffd700">(</span><span class="b3" style="color:#d4d4d4">t_data, S_data, </span><span class="b3" style="color:#9cdcfe">marker</span><span class="b3" style="color:#d4d4d4">=</span><span class="b3" style="color:#ce9178">&#x27;x&#x27;</span><span class="b3" style="color:#d4d4d4">, </span><span class="b3" style="color:#9cdcfe">color</span><span class="b3" style="color:#d4d4d4">=</span><span class="b3" style="color:#ce9178">&#x27;blue&#x27;</span><span class="b3" style="color:#ffd700">)</span></div>
<div class="t mono" style="left:0;width:40.5px;text-align:right;top:165.66px;font-size:12.31px;color:#858585">54</div>
<div class="t mono" style="left:65.20px;top:165.66px;font-size:12.31px"><span class="b3" style="color:#d4d4d4">ax.scatter</span><span class="b3" style="color:#ffd700">(</span><span class="b3" style="color:#d4d4d4">t_data, R_data, </span><span class="b3" style="color:#9cdcfe">marker</span><span class="b3" style="color:#d4d4d4">=</span><span class="b3" style="color:#ce9178">&#x27;x&#x27;</span><span class="b3" style="color:#d4d4d4">, </span><span class="b3" style="color:#9cdcfe">color</span><span class="b3" style="color:#d4d4d4">=</span><span class="b3" style="color:#ce9178">&#x27;green&#x27;</span><span class="b3" style="color:#ffd700">)</span></div>
<div class="t mono" style="left:0;width:40.5px;text-align:right;top:183.87px;font-size:12.31px;color:#858585">55</div>
<div class="t mono" style="left:65.20px;top:183.87px;font-size:12.31px"><span class="b3" style="color:#d4d4d4">ax.legend</span><span class="b3" style="color:#ffd700">()</span></div>
<div class="t mono" style="left:0;width:40.5px;text-align:right;top:202.08px;font-size:12.31px;color:#858585">56</div>
<div class="t mono" style="left:65.20px;top:202.08px;font-size:12.31px"><span class="b3" style="color:#d4d4d4">ax.set_xlabel</span><span class="b3" style="color:#ffd700">(</span><span class="b3" style="color:#ce9178">&#x27;Time [days]&#x27;</span><span class="b3" style="color:#ffd700">)</span></div>
<div class="t mono" style="left:0;width:40.5px;text-align:right;top:220.28px;font-size:12.31px;color:#858585">57</div>
<div class="t mono" style="left:65.20px;top:220.28px;font-size:12.31px"></div>
<div class="t mono" style="left:0;width:40.5px;text-align:right;top:238.49px;font-size:12.31px;color:#858585">58</div>
<div class="t mono" style="left:65.20px;top:238.49px;font-size:12.31px"><span class="b3" style="color:#6a9955"># adjust the main plot to make room for the sliders</span></div>
<div class="t mono" style="left:0;width:40.5px;text-align:right;top:256.70px;font-size:12.31px;color:#858585">59</div>
<div class="t mono" style="left:65.20px;top:256.70px;font-size:12.31px"><span class="b3" style="color:#d4d4d4">fig.subplots_adjust</span><span class="b3" style="color:#ffd700">(</span><span class="b3" style="color:#9cdcfe">left</span><span class="b3" style="color:#d4d4d4">=</span><span class="b3" style="color:#b5cea8">0.25</span><span class="b3" style="color:#d4d4d4">, </span><span class="b3" style="color:#9cdcfe">bottom</span><span class="b3" style="color:#d4d4d4">=</span><span class="b3" style="color:#b5cea8">0.25</span><span class="b3" style="color:#ffd700">)</span></div>
<div class="t mono" style="left:0;width:40.5px;text-align:right;top:274.91px;font-size:12.31px;color:#858585">60</div>
<div class="t mono" style="left:65.20px;top:274.91px;font-size:12.31px"></div>
<div class="t mono" style="left:0;width:40.5px;text-align:right;top:293.11px;font-size:12.31px;color:#858585">61</div>
<div class="t mono" style="left:65.20px;top:293.11px;font-size:12.31px"><span class="b3" style="color:#6a9955"># Make a horizontal slider to control the frequency.</span></div>
<div class="t mono" style="left:0;width:40.5px;text-align:right;top:311.32px;font-size:12.31px;color:#858585">62</div>
<div class="t mono" style="left:65.20px;top:311.32px;font-size:12.31px"><span class="b3" style="color:#d4d4d4">axbeta = fig.add_axes</span><span class="b3" style="color:#ffd700">(</span><span class="b3" style="color:#da70d6">[</span><span class="b3" style="color:#b5cea8">0.25</span><span class="b3" style="color:#d4d4d4">, </span><span class="b3" style="color:#b5cea8">0.1</span><span class="b3" style="color:#d4d4d4">, </span><span class="b3" style="color:#b5cea8">0.65</span><span class="b3" style="color:#d4d4d4">, </span><span class="b3" style="color:#b5cea8">0.03</span><span class="b3" style="color:#da70d6">]</span><span class="b3" style="color:#ffd700">)</span></div>
<div class="t mono" style="left:0;width:40.5px;text-align:right;top:329.53px;font-size:12.31px;color:#858585">63</div>
<div class="t mono" style="left:65.20px;top:329.53px;font-size:12.31px"><span class="b3" style="color:#d4d4d4">beta_slider = Slider</span><span class="b3" style="color:#ffd700">(</span></div>
<div class="t mono" style="left:0;width:40.5px;text-align:right;top:347.73px;font-size:12.31px;color:#858585">64</div>
<div class="t mono" style="left:65.20px;top:347.73px;font-size:12.31px"><span class="b3" style="color:#d4d4d4">    </span><span class="b3" style="color:#9cdcfe">ax</span><span class="b3" style="color:#d4d4d4">=axbeta,</span></div>
<div class="t mono" style="left:0;width:40.5px;text-align:right;top:365.94px;font-size:12.31px;color:#858585">65</div>
<div class="t mono" style="left:65.20px;top:365.94px;font-size:12.31px"><span class="b3" style="color:#d4d4d4">    </span><span class="b3" style="color:#9cdcfe">label</span><span class="b3" style="color:#d4d4d4">=</span><span class="b3" style="color:#569cd6">r</span><span class="b3" style="color:#ce9178">&#x27;</span><span class="b3" style="color:#d16969">$\beta$</span><span class="b3" style="color:#ce9178">&#x27;</span><span class="b3" style="color:#d4d4d4">,</span></div>
<div class="t mono" style="left:0;width:40.5px;text-align:right;top:384.15px;font-size:12.31px;color:#858585">66</div>
<div class="t mono" style="left:65.20px;top:384.15px;font-size:12.31px"><span class="b3" style="color:#d4d4d4">    </span><span class="b3" style="color:#9cdcfe">valmin</span><span class="b3" style="color:#d4d4d4">=</span><span class="b3" style="color:#b5cea8">0</span><span class="b3" style="color:#d4d4d4">,</span></div>
<div class="t mono" style="left:0;width:40.5px;text-align:right;top:402.35px;font-size:12.31px;color:#858585">67</div>
<div class="t mono" style="left:65.20px;top:402.35px;font-size:12.31px"><span class="b3" style="color:#d4d4d4">    </span><span class="b3" style="color:#9cdcfe">valmax</span><span class="b3" style="color:#d4d4d4">=</span><span class="b3" style="color:#b5cea8">0.05</span><span class="b3" style="color:#d4d4d4">,</span></div>
<div class="t mono" style="left:0;width:40.5px;text-align:right;top:420.56px;font-size:12.31px;color:#858585">68</div>
<div class="t mono" style="left:65.20px;top:420.56px;font-size:12.31px"><span class="b3" style="color:#d4d4d4">    </span><span class="b3" style="color:#9cdcfe">valinit</span><span class="b3" style="color:#d4d4d4">=beta,</span></div>
<div class="t mono" style="left:0;width:40.5px;text-align:right;top:438.77px;font-size:12.31px;color:#858585">69</div>
<div class="t mono" style="left:65.20px;top:438.77px;font-size:12.31px"><span class="b3" style="color:#ffd700">)</span></div>
<div class="t mono" style="left:0;width:40.5px;text-align:right;top:456.97px;font-size:12.31px;color:#858585">70</div>
<div class="t mono" style="left:65.20px;top:456.97px;font-size:12.31px"></div>
<div class="t mono" style="left:0;width:40.5px;text-align:right;top:475.18px;font-size:12.31px;color:#858585">71</div>
<div class="t mono" style="left:65.20px;top:475.18px;font-size:12.31px"><span class="b3" style="color:#d4d4d4">axgamma = fig.add_axes</span><span class="b3" style="color:#ffd700">(</span><span class="b3" style="color:#da70d6">[</span><span class="b3" style="color:#b5cea8">0.25</span><span class="b3" style="color:#d4d4d4">, </span><span class="b3" style="color:#b5cea8">0.05</span><span class="b3" style="color:#d4d4d4">, </span><span class="b3" style="color:#b5cea8">0.65</span><span class="b3" style="color:#d4d4d4">, </span><span class="b3" style="color:#b5cea8">0.03</span><span class="b3" style="color:#da70d6">]</span><span class="b3" style="color:#ffd700">)</span></div>
<div class="t mono" style="left:0;width:40.5px;text-align:right;top:493.39px;font-size:12.31px;color:#858585">72</div>
<div class="t mono" style="left:65.20px;top:493.39px;font-size:12.31px"><span class="b3" style="color:#d4d4d4">gamma_slider = Slider</span><span class="b3" style="color:#ffd700">(</span></div>
<div class="t mono" style="left:0;width:40.5px;text-align:right;top:511.60px;font-size:12.31px;color:#858585">73</div>
<div class="t mono" style="left:65.20px;top:511.60px;font-size:12.31px"><span class="b3" style="color:#d4d4d4">    </span><span class="b3" style="color:#9cdcfe">ax</span><span class="b3" style="color:#d4d4d4">=axgamma,</span></div>
</div>
<div class="a" style="left:340px;top:430.3px;width:1px;height:91.0px;background:#404040"></div>
<div class="a" style="left:340px;top:594.2px;width:1px;height:17.8px;background:#404040"></div>
<svg class="a" style="left:391.8px;top:300.3px" width="44" height="4"><polyline points="0.0,0.8 2.0,3.0 4.0,0.8 6.0,3.0 8.0,0.8 10.0,3.0 12.0,0.8 14.0,3.0 16.0,0.8 18.0,3.0 20.0,0.8 22.0,3.0 24.0,0.8 26.0,3.0 28.0,0.8 30.0,3.0 32.0,0.8 34.0,3.0 36.0,0.8 38.0,3.0 40.0,0.8 42.0,3.0 44.0,0.8" fill="none" stroke="#3794ff" stroke-width="1.1"/></svg>
<svg class="a" style="left:340.2px;top:409.5px" width="44" height="4"><polyline points="0.0,0.8 2.0,3.0 4.0,0.8 6.0,3.0 8.0,0.8 10.0,3.0 12.0,0.8 14.0,3.0 16.0,0.8 18.0,3.0 20.0,0.8 22.0,3.0 24.0,0.8 26.0,3.0 28.0,0.8 30.0,3.0 32.0,0.8 34.0,3.0 36.0,0.8 38.0,3.0 40.0,0.8 42.0,3.0 44.0,0.8" fill="none" stroke="#3794ff" stroke-width="1.1"/></svg>
<svg class="a" style="left:391.8px;top:445.9px" width="44" height="4"><polyline points="0.0,0.8 2.0,3.0 4.0,0.8 6.0,3.0 8.0,0.8 10.0,3.0 12.0,0.8 14.0,3.0 16.0,0.8 18.0,3.0 20.0,0.8 22.0,3.0 24.0,0.8 26.0,3.0 28.0,0.8 30.0,3.0 32.0,0.8 34.0,3.0 36.0,0.8 38.0,3.0 40.0,0.8 42.0,3.0 44.0,0.8" fill="none" stroke="#3794ff" stroke-width="1.1"/></svg>
<svg class="a" style="left:369.7px;top:482.3px" width="44" height="4"><polyline points="0.0,0.8 2.0,3.0 4.0,0.8 6.0,3.0 8.0,0.8 10.0,3.0 12.0,0.8 14.0,3.0 16.0,0.8 18.0,3.0 20.0,0.8 22.0,3.0 24.0,0.8 26.0,3.0 28.0,0.8 30.0,3.0 32.0,0.8 34.0,3.0 36.0,0.8 38.0,3.0 40.0,0.8 42.0,3.0 44.0,0.8" fill="none" stroke="#3794ff" stroke-width="1.1"/></svg>
<svg class="a" style="left:369.7px;top:500.6px" width="44" height="4"><polyline points="0.0,0.8 2.0,3.0 4.0,0.8 6.0,3.0 8.0,0.8 10.0,3.0 12.0,0.8 14.0,3.0 16.0,0.8 18.0,3.0 20.0,0.8 22.0,3.0 24.0,0.8 26.0,3.0 28.0,0.8 30.0,3.0 32.0,0.8 34.0,3.0 36.0,0.8 38.0,3.0 40.0,0.8 42.0,3.0 44.0,0.8" fill="none" stroke="#3794ff" stroke-width="1.1"/></svg>
<svg class="a" style="left:369.7px;top:518.8px" width="52" height="4"><polyline points="0.0,0.8 2.0,3.0 4.0,0.8 6.0,3.0 8.0,0.8 10.0,3.0 12.0,0.8 14.0,3.0 16.0,0.8 18.0,3.0 20.0,0.8 22.0,3.0 24.0,0.8 26.0,3.0 28.0,0.8 30.0,3.0 32.0,0.8 34.0,3.0 36.0,0.8 38.0,3.0 40.0,0.8 42.0,3.0 44.0,0.8 46.0,3.0 48.0,0.8 50.0,3.0" fill="none" stroke="#3794ff" stroke-width="1.1"/></svg>
<svg class="a" style="left:340.2px;top:573.4px" width="52" height="4"><polyline points="0.0,0.8 2.0,3.0 4.0,0.8 6.0,3.0 8.0,0.8 10.0,3.0 12.0,0.8 14.0,3.0 16.0,0.8 18.0,3.0 20.0,0.8 22.0,3.0 24.0,0.8 26.0,3.0 28.0,0.8 30.0,3.0 32.0,0.8 34.0,3.0 36.0,0.8 38.0,3.0 40.0,0.8 42.0,3.0 44.0,0.8 46.0,3.0 48.0,0.8 50.0,3.0" fill="none" stroke="#3794ff" stroke-width="1.1"/></svg>
<svg class="a" style="left:391.8px;top:609.8px" width="52" height="4"><polyline points="0.0,0.8 2.0,3.0 4.0,0.8 6.0,3.0 8.0,0.8 10.0,3.0 12.0,0.8 14.0,3.0 16.0,0.8 18.0,3.0 20.0,0.8 22.0,3.0 24.0,0.8 26.0,3.0 28.0,0.8 30.0,3.0 32.0,0.8 34.0,3.0 36.0,0.8 38.0,3.0 40.0,0.8 42.0,3.0 44.0,0.8 46.0,3.0 48.0,0.8 50.0,3.0" fill="none" stroke="#3794ff" stroke-width="1.1"/></svg>
<svg class="a" style="left:1196px;top:84px;opacity:0.42" width="70" height="150"><rect x="0.0" y="0.0" width="6.3" height="1.3" fill="#c586c0"/><rect x="7.4" y="0.0" width="5.2" height="1.3" fill="#d4d4d4"/><rect x="13.7" y="0.0" width="2.1" height="1.3" fill="#c586c0"/><rect x="16.8" y="0.0" width="2.1" height="1.3" fill="#d4d4d4"/><rect x="0.0" y="1.7" width="6.3" height="1.3" fill="#c586c0"/><rect x="7.4" y="1.7" width="10.5" height="1.3" fill="#d4d4d4"/><rect x="17.9" y="1.7" width="1.1" height="1.3" fill="#d4d4d4"/><rect x="18.9" y="1.7" width="6.3" height="1.3" fill="#d4d4d4"/><rect x="26.2" y="1.7" width="2.1" height="1.3" fill="#c586c0"/><rect x="29.4" y="1.7" width="3.2" height="1.3" fill="#d4d4d4"/><rect x="0.0" y="3.4" width="4.2" height="1.3" fill="#c586c0"/><rect x="5.2" y="3.4" width="10.5" height="1.3" fill="#d4d4d4"/><rect x="15.8" y="3.4" width="1.1" height="1.3" fill="#d4d4d4"/><rect x="16.8" y="3.4" width="7.4" height="1.3" fill="#d4d4d4"/><rect x="25.2" y="3.4" width="6.3" height="1.3" fill="#c586c0"/><rect x="32.6" y="3.4" width="6.3" height="1.3" fill="#d4d4d4"/><rect x="38.9" y="3.4" width="1.1" height="1.3" fill="#d4d4d4"/><rect x="41.0" y="3.4" width="6.3" height="1.3" fill="#d4d4d4"/><rect x="0.0" y="5.2" width="4.2" height="1.3" fill="#c586c0"/><rect x="5.2" y="5.2" width="5.2" height="1.3" fill="#d4d4d4"/><rect x="10.5" y="5.2" width="1.1" height="1.3" fill="#d4d4d4"/><rect x="11.6" y="5.2" width="9.5" height="1.3" fill="#d4d4d4"/><rect x="22.1" y="5.2" width="6.3" height="1.3" fill="#c586c0"/><rect x="29.4" y="5.2" width="6.3" height="1.3" fill="#d4d4d4"/><rect x="0.0" y="8.6" width="1.1" height="1.3" fill="#6a9955"/><rect x="2.1" y="8.6" width="4.2" height="1.3" fill="#6a9955"/><rect x="7.4" y="8.6" width="8.4" height="1.3" fill="#6a9955"/><rect x="16.8" y="8.6" width="4.2" height="1.3" fill="#6a9955"/><rect x="22.1" y="8.6" width="3.2" height="1.3" fill="#6a9955"/><rect x="26.2" y="8.6" width="8.4" height="1.3" fill="#6a9955"/><rect x="0.0" y="10.3" width="6.3" height="1.3" fill="#d4d4d4"/><rect x="7.4" y="10.3" width="1.1" height="1.3" fill="#d4d4d4"/><rect x="9.5" y="10.3" width="2.1" height="1.3" fill="#d4d4d4"/><rect x="11.6" y="10.3" width="1.1" height="1.3" fill="#d4d4d4"/><rect x="12.6" y="10.3" width="5.2" height="1.3" fill="#d4d4d4"/><rect x="17.9" y="10.3" width="2.1" height="1.3" fill="#d4d4d4"/><rect x="19.9" y="10.3" width="1.1" height="1.3" fill="#b5cea8"/><rect x="21.0" y="10.3" width="1.1" height="1.3" fill="#d4d4d4"/><rect x="23.1" y="10.3" width="4.2" height="1.3" fill="#b5cea8"/><rect x="27.3" y="10.3" width="1.1" height="1.3" fill="#d4d4d4"/><rect x="29.4" y="10.3" width="4.2" height="1.3" fill="#b5cea8"/><rect x="33.6" y="10.3" width="1.1" height="1.3" fill="#d4d4d4"/><rect x="35.7" y="10.3" width="4.2" height="1.3" fill="#b5cea8"/><rect x="39.9" y="10.3" width="1.1" height="1.3" fill="#d4d4d4"/><rect x="42.0" y="10.3" width="4.2" height="1.3" fill="#b5cea8"/><rect x="46.2" y="10.3" width="1.1" height="1.3" fill="#d4d4d4"/><rect x="48.3" y="10.3" width="4.2" height="1.3" fill="#b5cea8"/><rect x="52.5" y="10.3" width="1.1" height="1.3" fill="#d4d4d4"/><rect x="54.6" y="10.3" width="4.2" height="1.3" fill="#b5cea8"/><rect x="58.8" y="10.3" width="2.1" height="1.3" fill="#d4d4d4"/><rect x="0.0" y="12.0" width="6.3" height="1.3" fill="#d4d4d4"/><rect x="7.4" y="12.0" width="1.1" height="1.3" fill="#d4d4d4"/><rect x="9.5" y="12.0" width="2.1" height="1.3" fill="#d4d4d4"/><rect x="11.6" y="12.0" width="1.1" height="1.3" fill="#d4d4d4"/><rect x="12.6" y="12.0" width="5.2" height="1.3" fill="#d4d4d4"/><rect x="17.9" y="12.0" width="2.1" height="1.3" fill="#d4d4d4"/><rect x="19.9" y="12.0" width="3.2" height="1.3" fill="#b5cea8"/><rect x="23.1" y="12.0" width="1.1" height="1.3" fill="#d4d4d4"/><rect x="25.2" y="12.0" width="3.2" height="1.3" fill="#b5cea8"/><rect x="28.4" y="12.0" width="1.1" height="1.3" fill="#d4d4d4"/><rect x="30.5" y="12.0" width="3.2" height="1.3" fill="#b5cea8"/><rect x="33.6" y="12.0" width="1.1" height="1.3" fill="#d4d4d4"/><rect x="35.7" y="12.0" width="3.2" height="1.3" fill="#b5cea8"/><rect x="38.9" y="12.0" width="1.1" height="1.3" fill="#d4d4d4"/><rect x="41.0" y="12.0" width="3.2" height="1.3" fill="#b5cea8"/><rect x="44.1" y="12.0" width="1.1" height="1.3" fill="#d4d4d4"/><rect x="46.2" y="12.0" width="2.1" height="1.3" fill="#b5cea8"/><rect x="48.3" y="12.0" width="1.1" height="1.3" fill="#d4d4d4"/><rect x="50.4" y="12.0" width="2.1" height="1.3" fill="#b5cea8"/><rect x="52.5" y="12.0" width="2.1" height="1.3" fill="#d4d4d4"/><rect x="0.0" y="13.8" width="6.3" height="1.3" fill="#d4d4d4"/><rect x="7.4" y="13.8" width="1.1" height="1.3" fill="#d4d4d4"/><rect x="9.5" y="13.8" width="2.1" height="1.3" fill="#d4d4d4"/><rect x="11.6" y="13.8" width="1.1" height="1.3" fill="#d4d4d4"/><rect x="12.6" y="13.8" width="5.2" height="1.3" fill="#d4d4d4"/><rect x="17.9" y="13.8" width="2.1" height="1.3" fill="#d4d4d4"/><rect x="19.9" y="13.8" width="2.1" height="1.3" fill="#b5cea8"/><rect x="22.1" y="13.8" width="1.1" height="1.3" fill="#d4d4d4"/><rect x="24.2" y="13.8" width="2.1" height="1.3" fill="#b5cea8"/><rect x="26.2" y="13.8" width="1.1" height="1.3" fill="#d4d4d4"/><rect x="28.4" y="13.8" width="2.1" height="1.3" fill="#b5cea8"/><rect x="30.5" y="13.8" width="1.1" height="1.3" fill="#d4d4d4"/><rect x="32.6" y="13.8" width="2.1" height="1.3" fill="#b5cea8"/><rect x="34.6" y="13.8" width="1.1" height="1.3" fill="#d4d4d4"/><rect x="36.8" y="13.8" width="1.1" height="1.3" fill="#b5cea8"/><rect x="37.8" y="13.8" width="1.1" height="1.3" fill="#d4d4d4"/><rect x="39.9" y="13.8" width="1.1" height="1.3" fill="#b5cea8"/><rect x="41.0" y="13.8" width="1.1" height="1.3" fill="#d4d4d4"/><rect x="43.1" y="13.8" width="1.1" height="1.3" fill="#b5cea8"/><rect x="44.1" y="13.8" width="2.1" height="1.3" fill="#d4d4d4"/><rect x="0.0" y="15.5" width="6.3" height="1.3" fill="#d4d4d4"/><rect x="7.4" y="15.5" width="1.1" height="1.3" fill="#d4d4d4"/><rect x="9.5" y="15.5" width="2.1" height="1.3" fill="#d4d4d4"/><rect x="11.6" y="15.5" width="1.1" height="1.3" fill="#d4d4d4"/><rect x="12.6" y="15.5" width="5.2" height="1.3" fill="#d4d4d4"/><rect x="17.9" y="15.5" width="2.1" height="1.3" fill="#d4d4d4"/><rect x="19.9" y="15.5" width="1.1" height="1.3" fill="#b5cea8"/><rect x="21.0" y="15.5" width="1.1" height="1.3" fill="#d4d4d4"/><rect x="23.1" y="15.5" width="2.1" height="1.3" fill="#b5cea8"/><rect x="25.2" y="15.5" width="1.1" height="1.3" fill="#d4d4d4"/><rect x="27.3" y="15.5" width="2.1" height="1.3" fill="#b5cea8"/><rect x="29.4" y="15.5" width="1.1" height="1.3" fill="#d4d4d4"/><rect x="31.5" y="15.5" width="3.2" height="1.3" fill="#b5cea8"/><rect x="34.6" y="15.5" width="1.1" height="1.3" fill="#d4d4d4"/><rect x="36.8" y="15.5" width="3.2" height="1.3" fill="#b5cea8"/><rect x="39.9" y="15.5" width="1.1" height="1.3" fill="#d4d4d4"/><rect x="42.0" y="15.5" width="3.2" height="1.3" fill="#b5cea8"/><rect x="45.1" y="15.5" width="1.1" height="1.3" fill="#d4d4d4"/><rect x="47.2" y="15.5" width="3.2" height="1.3" fill="#b5cea8"/><rect x="50.4" y="15.5" width="2.1" height="1.3" fill="#d4d4d4"/><rect x="0.0" y="18.9" width="3.2" height="1.3" fill="#c586c0"/><rect x="4.2" y="18.9" width="9.5" height="1.3" fill="#d4d4d4"/><rect x="13.7" y="18.9" width="1.1" height="1.3" fill="#d4d4d4"/><rect x="14.7" y="18.9" width="11.6" height="1.3" fill="#d4d4d4"/><rect x="26.2" y="18.9" width="1.1" height="1.3" fill="#d4d4d4"/><rect x="28.4" y="18.9" width="1.1" height="1.3" fill="#d4d4d4"/><rect x="29.4" y="18.9" width="1.1" height="1.3" fill="#d4d4d4"/><rect x="31.5" y="18.9" width="4.2" height="1.3" fill="#d4d4d4"/><rect x="35.7" y="18.9" width="1.1" height="1.3" fill="#d4d4d4"/><rect x="37.8" y="18.9" width="5.2" height="1.3" fill="#d4d4d4"/><rect x="43.1" y="18.9" width="2.1" height="1.3" fill="#d4d4d4"/><rect x="4.2" y="20.6" width="2.1" height="1.3" fill="#d4d4d4"/><rect x="6.3" y="20.6" width="1.1" height="1.3" fill="#d4d4d4"/><rect x="8.4" y="20.6" width="2.1" height="1.3" fill="#d4d4d4"/><rect x="10.5" y="20.6" width="1.1" height="1.3" fill="#d4d4d4"/><rect x="12.6" y="20.6" width="2.1" height="1.3" fill="#d4d4d4"/><rect x="15.8" y="20.6" width="1.1" height="1.3" fill="#d4d4d4"/><rect x="17.9" y="20.6" width="11.6" height="1.3" fill="#d4d4d4"/><rect x="4.2" y="22.4" width="1.1" height="1.3" fill="#d4d4d4"/><rect x="5.2" y="22.4" width="1.1" height="1.3" fill="#d4d4d4"/><rect x="7.4" y="22.4" width="1.1" height="1.3" fill="#d4d4d4"/><rect x="8.4" y="22.4" width="1.1" height="1.3" fill="#d4d4d4"/><rect x="10.5" y="22.4" width="1.1" height="1.3" fill="#d4d4d4"/><rect x="12.6" y="22.4" width="1.1" height="1.3" fill="#d4d4d4"/><rect x="14.7" y="22.4" width="1.1" height="1.3" fill="#d4d4d4"/><rect x="15.8" y="22.4" width="2.1" height="1.3" fill="#d4d4d4"/><rect x="17.9" y="22.4" width="2.1" height="1.3" fill="#d4d4d4"/><rect x="21.0" y="22.4" width="1.1" height="1.3" fill="#d4d4d4"/><rect x="22.1" y="22.4" width="2.1" height="1.3" fill="#d4d4d4"/><rect x="24.2" y="22.4" width="2.1" height="1.3" fill="#d4d4d4"/><rect x="27.3" y="22.4" width="1.1" height="1.3" fill="#d4d4d4"/><rect x="28.4" y="22.4" width="2.1" height="1.3" fill="#d4d4d4"/><rect x="30.5" y="22.4" width="1.1" height="1.3" fill="#d4d4d4"/><rect x="4.2" y="24.1" width="2.1" height="1.3" fill="#d4d4d4"/><rect x="7.4" y="24.1" width="1.1" height="1.3" fill="#d4d4d4"/><rect x="9.5" y="24.1" width="1.1" height="1.3" fill="#d4d4d4"/><rect x="10.5" y="24.1" width="1.1" height="1.3" fill="#d4d4d4"/><rect x="11.6" y="24.1" width="1.1" height="1.3" fill="#b5cea8"/><rect x="12.6" y="24.1" width="1.1" height="1.3" fill="#d4d4d4"/><rect x="14.7" y="24.1" width="1.1" height="1.3" fill="#d4d4d4"/><rect x="16.8" y="24.1" width="1.1" height="1.3" fill="#d4d4d4"/><rect x="17.9" y="24.1" width="1.1" height="1.3" fill="#d4d4d4"/><rect x="18.9" y="24.1" width="1.1" height="1.3" fill="#b5cea8"/><rect x="19.9" y="24.1" width="1.1" height="1.3" fill="#d4d4d4"/><rect x="4.2" y="25.8" width="3.2" height="1.3" fill="#c586c0"/><rect x="8.4" y="25.8" width="1.1" height="1.3" fill="#d4d4d4"/><rect x="10.5" y="25.8" width="2.1" height="1.3" fill="#c586c0"/><rect x="13.7" y="25.8" width="1.1" height="1.3" fill="#d4d4d4"/><rect x="14.7" y="25.8" width="1.1" height="1.3" fill="#d4d4d4"/><rect x="15.8" y="25.8" width="1.1" height="1.3" fill="#b5cea8"/><rect x="16.8" y="25.8" width="3.2" height="1.3" fill="#d4d4d4"/><rect x="8.4" y="27.5" width="6.3" height="1.3" fill="#d4d4d4"/><rect x="15.8" y="27.5" width="1.1" height="1.3" fill="#d4d4d4"/><rect x="17.9" y="27.5" width="1.1" height="1.3" fill="#d4d4d4"/><rect x="18.9" y="27.5" width="2.1" height="1.3" fill="#d4d4d4"/><rect x="21.0" y="27.5" width="1.1" height="1.3" fill="#b5cea8"/><rect x="22.1" y="27.5" width="1.1" height="1.3" fill="#d4d4d4"/><rect x="24.2" y="27.5" width="1.1" height="1.3" fill="#d4d4d4"/><rect x="26.2" y="27.5" width="1.1" height="1.3" fill="#d4d4d4"/><rect x="27.3" y="27.5" width="4.2" height="1.3" fill="#d4d4d4"/><rect x="31.5" y="27.5" width="1.1" height="1.3" fill="#d4d4d4"/><rect x="32.6" y="27.5" width="1.1" height="1.3" fill="#d4d4d4"/><rect x="33.6" y="27.5" width="2.1" height="1.3" fill="#d4d4d4"/><rect x="35.7" y="27.5" width="1.1" height="1.3" fill="#b5cea8"/><rect x="36.8" y="27.5" width="2.1" height="1.3" fill="#d4d4d4"/><rect x="38.9" y="27.5" width="1.1" height="1.3" fill="#d4d4d4"/><rect x="39.9" y="27.5" width="2.1" height="1.3" fill="#d4d4d4"/><rect x="42.0" y="27.5" width="1.1" height="1.3" fill="#b5cea8"/><rect x="43.1" y="27.5" width="3.2" height="1.3" fill="#d4d4d4"/><rect x="46.2" y="27.5" width="2.1" height="1.3" fill="#d4d4d4"/><rect x="8.4" y="29.2" width="6.3" height="1.3" fill="#d4d4d4"/><rect x="15.8" y="29.2" width="1.1" height="1.3" fill="#d4d4d4"/><rect x="17.9" y="29.2" width="1.1" height="1.3" fill="#d4d4d4"/><rect x="18.9" y="29.2" width="2.1" height="1.3" fill="#d4d4d4"/><rect x="21.0" y="29.2" width="1.1" height="1.3" fill="#b5cea8"/><rect x="22.1" y="29.2" width="1.1" height="1.3" fill="#d4d4d4"/><rect x="24.2" y="29.2" width="1.1" height="1.3" fill="#d4d4d4"/><rect x="26.2" y="29.2" width="1.1" height="1.3" fill="#d4d4d4"/><rect x="27.3" y="29.2" width="4.2" height="1.3" fill="#d4d4d4"/><rect x="31.5" y="29.2" width="1.1" height="1.3" fill="#d4d4d4"/><rect x="32.6" y="29.2" width="1.1" height="1.3" fill="#d4d4d4"/><rect x="33.6" y="29.2" width="2.1" height="1.3" fill="#d4d4d4"/><rect x="35.7" y="29.2" width="1.1" height="1.3" fill="#b5cea8"/><rect x="36.8" y="29.2" width="2.1" height="1.3" fill="#d4d4d4"/><rect x="38.9" y="29.2" width="1.1" height="1.3" fill="#d4d4d4"/><rect x="39.9" y="29.2" width="2.1" height="1.3" fill="#d4d4d4"/><rect x="42.0" y="29.2" width="1.1" height="1.3" fill="#b5cea8"/><rect x="43.1" y="29.2" width="1.1" height="1.3" fill="#d4d4d4"/><rect x="45.1" y="29.2" width="1.1" height="1.3" fill="#d4d4d4"/><rect x="47.2" y="29.2" width="5.2" height="1.3" fill="#d4d4d4"/><rect x="52.5" y="29.2" width="1.1" height="1.3" fill="#d4d4d4"/><rect x="53.6" y="29.2" width="1.1" height="1.3" fill="#d4d4d4"/><rect x="54.6" y="29.2" width="2.1" height="1.3" fill="#d4d4d4"/><rect x="56.7" y="29.2" width="1.1" height="1.3" fill="#b5cea8"/><rect x="57.8" y="29.2" width="3.2" height="1.3" fill="#d4d4d4"/><rect x="60.9" y="29.2" width="2.1" height="1.3" fill="#d4d4d4"/><rect x="8.4" y="31.0" width="6.3" height="1.3" fill="#d4d4d4"/><rect x="15.8" y="31.0" width="1.1" height="1.3" fill="#d4d4d4"/><rect x="17.9" y="31.0" width="1.1" height="1.3" fill="#d4d4d4"/><rect x="18.9" y="31.0" width="2.1" height="1.3" fill="#d4d4d4"/><rect x="21.0" y="31.0" width="1.1" height="1.3" fill="#b5cea8"/><rect x="22.1" y="31.0" width="1.1" height="1.3" fill="#d4d4d4"/><rect x="24.2" y="31.0" width="1.1" height="1.3" fill="#d4d4d4"/><rect x="26.2" y="31.0" width="1.1" height="1.3" fill="#d4d4d4"/><rect x="27.3" y="31.0" width="5.2" height="1.3" fill="#d4d4d4"/><rect x="32.6" y="31.0" width="1.1" height="1.3" fill="#d4d4d4"/><rect x="33.6" y="31.0" width="1.1" height="1.3" fill="#d4d4d4"/><rect x="34.6" y="31.0" width="2.1" height="1.3" fill="#d4d4d4"/><rect x="36.8" y="31.0" width="1.1" height="1.3" fill="#b5cea8"/><rect x="37.8" y="31.0" width="3.2" height="1.3" fill="#d4d4d4"/><rect x="41.0" y="31.0" width="2.1" height="1.3" fill="#d4d4d4"/><rect x="8.4" y="32.7" width="1.1" height="1.3" fill="#d4d4d4"/><rect x="9.5" y="32.7" width="1.1" height="1.3" fill="#d4d4d4"/><rect x="10.5" y="32.7" width="6.3" height="1.3" fill="#d4d4d4"/><rect x="16.8" y="32.7" width="1.1" height="1.3" fill="#d4d4d4"/><rect x="17.9" y="32.7" width="6.3" height="1.3" fill="#d4d4d4"/><rect x="24.2" y="32.7" width="2.1" height="1.3" fill="#d4d4d4"/><rect x="27.3" y="32.7" width="1.1" height="1.3" fill="#d4d4d4"/><rect x="28.4" y="32.7" width="1.1" height="1.3" fill="#d4d4d4"/><rect x="29.4" y="32.7" width="6.3" height="1.3" fill="#d4d4d4"/><rect x="35.7" y="32.7" width="1.1" height="1.3" fill="#d4d4d4"/><rect x="36.8" y="32.7" width="6.3" height="1.3" fill="#d4d4d4"/><rect x="43.1" y="32.7" width="1.1" height="1.3" fill="#d4d4d4"/><rect x="8.4" y="34.4" width="1.1" height="1.3" fill="#d4d4d4"/><rect x="9.5" y="34.4" width="1.1" height="1.3" fill="#d4d4d4"/><rect x="10.5" y="34.4" width="6.3" height="1.3" fill="#d4d4d4"/><rect x="16.8" y="34.4" width="1.1" height="1.3" fill="#d4d4d4"/><rect x="17.9" y="34.4" width="6.3" height="1.3" fill="#d4d4d4"/><rect x="24.2" y="34.4" width="1.1" height="1.3" fill="#d4d4d4"/><rect x="4.2" y="36.1" width="6.3" height="1.3" fill="#c586c0"/><rect x="11.6" y="36.1" width="2.1" height="1.3" fill="#d4d4d4"/><rect x="13.7" y="36.1" width="1.1" height="1.3" fill="#d4d4d4"/><rect x="14.7" y="36.1" width="5.2" height="1.3" fill="#d4d4d4"/><rect x="19.9" y="36.1" width="2.1" height="1.3" fill="#d4d4d4"/><rect x="22.1" y="36.1" width="1.1" height="1.3" fill="#d4d4d4"/><rect x="23.1" y="36.1" width="1.1" height="1.3" fill="#d4d4d4"/><rect x="25.2" y="36.1" width="1.1" height="1.3" fill="#d4d4d4"/><rect x="26.2" y="36.1" width="1.1" height="1.3" fill="#d4d4d4"/><rect x="28.4" y="36.1" width="1.1" height="1.3" fill="#d4d4d4"/><rect x="29.4" y="36.1" width="2.1" height="1.3" fill="#d4d4d4"/><rect x="0.0" y="39.6" width="1.1" height="1.3" fill="#6a9955"/><rect x="2.1" y="39.6" width="6.3" height="1.3" fill="#6a9955"/><rect x="9.5" y="39.6" width="7.4" height="1.3" fill="#6a9955"/><rect x="17.9" y="39.6" width="10.5" height="1.3" fill="#6a9955"/><rect x="0.0" y="41.3" width="4.2" height="1.3" fill="#d4d4d4"/><rect x="5.2" y="41.3" width="1.1" height="1.3" fill="#d4d4d4"/><rect x="7.4" y="41.3" width="6.3" height="1.3" fill="#b5cea8"/><rect x="0.0" y="43.0" width="5.2" height="1.3" fill="#d4d4d4"/><rect x="6.3" y="43.0" width="1.1" height="1.3" fill="#d4d4d4"/><rect x="8.4" y="43.0" width="5.2" height="1.3" fill="#b5cea8"/><rect x="0.0" y="44.7" width="1.1" height="1.3" fill="#d4d4d4"/><rect x="2.1" y="44.7" width="1.1" height="1.3" fill="#d4d4d4"/><rect x="4.2" y="44.7" width="2.1" height="1.3" fill="#d4d4d4"/><rect x="6.3" y="44.7" width="1.1" height="1.3" fill="#d4d4d4"/><rect x="7.4" y="44.7" width="8.4" height="1.3" fill="#d4d4d4"/><rect x="15.8" y="44.7" width="1.1" height="1.3" fill="#d4d4d4"/><rect x="16.8" y="44.7" width="1.1" height="1.3" fill="#b5cea8"/><rect x="17.9" y="44.7" width="1.1" height="1.3" fill="#d4d4d4"/><rect x="19.9" y="44.7" width="4.2" height="1.3" fill="#b5cea8"/><rect x="24.2" y="44.7" width="1.1" height="1.3" fill="#d4d4d4"/><rect x="26.2" y="44.7" width="4.2" height="1.3" fill="#b5cea8"/><rect x="30.5" y="44.7" width="1.1" height="1.3" fill="#d4d4d4"/><rect x="0.0" y="46.4" width="11.6" height="1.3" fill="#d4d4d4"/><rect x="12.6" y="46.4" width="1.1" height="1.3" fill="#d4d4d4"/><rect x="14.7" y="46.4" width="3.2" height="1.3" fill="#b5cea8"/><rect x="17.9" y="46.4" width="1.1" height="1.3" fill="#d4d4d4"/><rect x="19.9" y="46.4" width="2.1" height="1.3" fill="#b5cea8"/><rect x="22.1" y="46.4" width="1.1" height="1.3" fill="#d4d4d4"/><rect x="24.2" y="46.4" width="1.1" height="1.3" fill="#b5cea8"/><rect x="0.0" y="49.9" width="1.1" height="1.3" fill="#d4d4d4"/><rect x="1.1" y="49.9" width="1.1" height="1.3" fill="#d4d4d4"/><rect x="3.2" y="49.9" width="1.1" height="1.3" fill="#d4d4d4"/><rect x="4.2" y="49.9" width="1.1" height="1.3" fill="#d4d4d4"/><rect x="6.3" y="49.9" width="1.1" height="1.3" fill="#d4d4d4"/><rect x="8.4" y="49.9" width="1.1" height="1.3" fill="#d4d4d4"/><rect x="10.5" y="49.9" width="9.5" height="1.3" fill="#d4d4d4"/><rect x="19.9" y="49.9" width="1.1" height="1.3" fill="#d4d4d4"/><rect x="21.0" y="49.9" width="11.6" height="1.3" fill="#d4d4d4"/><rect x="32.6" y="49.9" width="1.1" height="1.3" fill="#d4d4d4"/><rect x="34.6" y="49.9" width="1.1" height="1.3" fill="#d4d4d4"/><rect x="35.7" y="49.9" width="1.1" height="1.3" fill="#d4d4d4"/><rect x="37.8" y="49.9" width="4.2" height="1.3" fill="#d4d4d4"/><rect x="42.0" y="49.9" width="1.1" height="1.3" fill="#d4d4d4"/><rect x="44.1" y="49.9" width="5.2" height="1.3" fill="#d4d4d4"/><rect x="49.4" y="49.9" width="1.1" height="1.3" fill="#d4d4d4"/><rect x="0.0" y="51.6" width="1.1" height="1.3" fill="#6a9955"/><rect x="2.1" y="51.6" width="6.3" height="1.3" fill="#6a9955"/><rect x="9.5" y="51.6" width="3.2" height="1.3" fill="#6a9955"/><rect x="13.7" y="51.6" width="6.3" height="1.3" fill="#6a9955"/><rect x="21.0" y="51.6" width="3.2" height="1.3" fill="#6a9955"/><rect x="25.2" y="51.6" width="3.2" height="1.3" fill="#6a9955"/><rect x="29.4" y="51.6" width="4.2" height="1.3" fill="#6a9955"/><rect x="34.6" y="51.6" width="4.2" height="1.3" fill="#6a9955"/><rect x="39.9" y="51.6" width="2.1" height="1.3" fill="#6a9955"/><rect x="43.1" y="51.6" width="4.2" height="1.3" fill="#6a9955"/><rect x="48.3" y="51.6" width="10.5" height="1.3" fill="#6a9955"/><rect x="0.0" y="53.3" width="3.2" height="1.3" fill="#d4d4d4"/><rect x="3.2" y="53.3" width="1.1" height="1.3" fill="#d4d4d4"/><rect x="5.2" y="53.3" width="2.1" height="1.3" fill="#d4d4d4"/><rect x="8.4" y="53.3" width="1.1" height="1.3" fill="#d4d4d4"/><rect x="10.5" y="53.3" width="3.2" height="1.3" fill="#d4d4d4"/><rect x="13.7" y="53.3" width="1.1" height="1.3" fill="#d4d4d4"/><rect x="14.7" y="53.3" width="8.4" height="1.3" fill="#d4d4d4"/><rect x="23.1" y="53.3" width="2.1" height="1.3" fill="#d4d4d4"/><rect x="0.0" y="55.0" width="5.2" height="1.3" fill="#d4d4d4"/><rect x="5.2" y="55.0" width="1.1" height="1.3" fill="#d4d4d4"/><rect x="7.4" y="55.0" width="1.1" height="1.3" fill="#d4d4d4"/><rect x="9.5" y="55.0" width="2.1" height="1.3" fill="#d4d4d4"/><rect x="11.6" y="55.0" width="1.1" height="1.3" fill="#d4d4d4"/><rect x="12.6" y="55.0" width="4.2" height="1.3" fill="#d4d4d4"/><rect x="16.8" y="55.0" width="1.1" height="1.3" fill="#d4d4d4"/><rect x="17.9" y="55.0" width="1.1" height="1.3" fill="#d4d4d4"/><rect x="18.9" y="55.0" width="1.1" height="1.3" fill="#d4d4d4"/><rect x="21.0" y="55.0" width="1.1" height="1.3" fill="#d4d4d4"/><rect x="22.1" y="55.0" width="1.1" height="1.3" fill="#d4d4d4"/><rect x="24.2" y="55.0" width="5.2" height="1.3" fill="#9cdcfe"/><rect x="29.4" y="55.0" width="1.1" height="1.3" fill="#d4d4d4"/><rect x="30.5" y="55.0" width="6.3" height="1.3" fill="#ce9178"/><rect x="36.8" y="55.0" width="1.1" height="1.3" fill="#d4d4d4"/><rect x="38.9" y="55.0" width="5.2" height="1.3" fill="#9cdcfe"/><rect x="44.1" y="55.0" width="1.1" height="1.3" fill="#d4d4d4"/><rect x="45.1" y="55.0" width="13.7" height="1.3" fill="#ce9178"/><rect x="58.8" y="55.0" width="1.1" height="1.3" fill="#d4d4d4"/><rect x="0.0" y="56.8" width="5.2" height="1.3" fill="#d4d4d4"/><rect x="5.2" y="56.8" width="1.1" height="1.3" fill="#d4d4d4"/><rect x="7.4" y="56.8" width="1.1" height="1.3" fill="#d4d4d4"/><rect x="9.5" y="56.8" width="2.1" height="1.3" fill="#d4d4d4"/><rect x="11.6" y="56.8" width="1.1" height="1.3" fill="#d4d4d4"/><rect x="12.6" y="56.8" width="4.2" height="1.3" fill="#d4d4d4"/><rect x="16.8" y="56.8" width="1.1" height="1.3" fill="#d4d4d4"/><rect x="17.9" y="56.8" width="1.1" height="1.3" fill="#d4d4d4"/><rect x="18.9" y="56.8" width="1.1" height="1.3" fill="#d4d4d4"/><rect x="21.0" y="56.8" width="1.1" height="1.3" fill="#d4d4d4"/><rect x="22.1" y="56.8" width="1.1" height="1.3" fill="#d4d4d4"/><rect x="24.2" y="56.8" width="5.2" height="1.3" fill="#9cdcfe"/><rect x="29.4" y="56.8" width="1.1" height="1.3" fill="#d4d4d4"/><rect x="30.5" y="56.8" width="5.2" height="1.3" fill="#ce9178"/><rect x="35.7" y="56.8" width="1.1" height="1.3" fill="#d4d4d4"/><rect x="37.8" y="56.8" width="5.2" height="1.3" fill="#9cdcfe"/><rect x="43.1" y="56.8" width="1.1" height="1.3" fill="#d4d4d4"/><rect x="44.1" y="56.8" width="11.6" height="1.3" fill="#ce9178"/><rect x="55.7" y="56.8" width="1.1" height="1.3" fill="#d4d4d4"/><rect x="0.0" y="58.5" width="5.2" height="1.3" fill="#d4d4d4"/><rect x="5.2" y="58.5" width="1.1" height="1.3" fill="#d4d4d4"/><rect x="7.4" y="58.5" width="1.1" height="1.3" fill="#d4d4d4"/><rect x="9.5" y="58.5" width="2.1" height="1.3" fill="#d4d4d4"/><rect x="11.6" y="58.5" width="1.1" height="1.3" fill="#d4d4d4"/><rect x="12.6" y="58.5" width="4.2" height="1.3" fill="#d4d4d4"/><rect x="16.8" y="58.5" width="1.1" height="1.3" fill="#d4d4d4"/><rect x="17.9" y="58.5" width="1.1" height="1.3" fill="#d4d4d4"/><rect x="18.9" y="58.5" width="1.1" height="1.3" fill="#d4d4d4"/><rect x="21.0" y="58.5" width="1.1" height="1.3" fill="#d4d4d4"/><rect x="22.1" y="58.5" width="1.1" height="1.3" fill="#d4d4d4"/><rect x="24.2" y="58.5" width="5.2" height="1.3" fill="#9cdcfe"/><rect x="29.4" y="58.5" width="1.1" height="1.3" fill="#d4d4d4"/><rect x="30.5" y="58.5" width="7.4" height="1.3" fill="#ce9178"/><rect x="37.8" y="58.5" width="1.1" height="1.3" fill="#d4d4d4"/><rect x="39.9" y="58.5" width="5.2" height="1.3" fill="#9cdcfe"/><rect x="45.1" y="58.5" width="1.1" height="1.3" fill="#d4d4d4"/><rect x="46.2" y="58.5" width="9.5" height="1.3" fill="#ce9178"/><rect x="55.7" y="58.5" width="1.1" height="1.3" fill="#d4d4d4"/><rect x="0.0" y="60.2" width="2.1" height="1.3" fill="#d4d4d4"/><rect x="2.1" y="60.2" width="1.1" height="1.3" fill="#d4d4d4"/><rect x="3.2" y="60.2" width="7.4" height="1.3" fill="#d4d4d4"/><rect x="10.5" y="60.2" width="1.1" height="1.3" fill="#d4d4d4"/><rect x="11.6" y="60.2" width="6.3" height="1.3" fill="#d4d4d4"/><rect x="17.9" y="60.2" width="1.1" height="1.3" fill="#d4d4d4"/><rect x="19.9" y="60.2" width="6.3" height="1.3" fill="#d4d4d4"/><rect x="26.2" y="60.2" width="1.1" height="1.3" fill="#d4d4d4"/><rect x="28.4" y="60.2" width="6.3" height="1.3" fill="#9cdcfe"/><rect x="34.6" y="60.2" width="1.1" height="1.3" fill="#d4d4d4"/><rect x="35.7" y="60.2" width="3.2" height="1.3" fill="#ce9178"/><rect x="38.9" y="60.2" width="1.1" height="1.3" fill="#d4d4d4"/><rect x="41.0" y="60.2" width="5.2" height="1.3" fill="#9cdcfe"/><rect x="46.2" y="60.2" width="1.1" height="1.3" fill="#d4d4d4"/><rect x="47.2" y="60.2" width="5.2" height="1.3" fill="#ce9178"/><rect x="52.5" y="60.2" width="1.1" height="1.3" fill="#d4d4d4"/><rect x="0.0" y="61.9" width="2.1" height="1.3" fill="#d4d4d4"/><rect x="2.1" y="61.9" width="1.1" height="1.3" fill="#d4d4d4"/><rect x="3.2" y="61.9" width="7.4" height="1.3" fill="#d4d4d4"/><rect x="10.5" y="61.9" width="1.1" height="1.3" fill="#d4d4d4"/><rect x="11.6" y="61.9" width="6.3" height="1.3" fill="#d4d4d4"/><rect x="17.9" y="61.9" width="1.1" height="1.3" fill="#d4d4d4"/><rect x="19.9" y="61.9" width="6.3" height="1.3" fill="#d4d4d4"/><rect x="26.2" y="61.9" width="1.1" height="1.3" fill="#d4d4d4"/><rect x="28.4" y="61.9" width="6.3" height="1.3" fill="#9cdcfe"/><rect x="34.6" y="61.9" width="1.1" height="1.3" fill="#d4d4d4"/><rect x="35.7" y="61.9" width="3.2" height="1.3" fill="#ce9178"/><rect x="38.9" y="61.9" width="1.1" height="1.3" fill="#d4d4d4"/><rect x="41.0" y="61.9" width="5.2" height="1.3" fill="#9cdcfe"/><rect x="46.2" y="61.9" width="1.1" height="1.3" fill="#d4d4d4"/><rect x="47.2" y="61.9" width="6.3" height="1.3" fill="#ce9178"/><rect x="53.6" y="61.9" width="1.1" height="1.3" fill="#d4d4d4"/><rect x="0.0" y="63.6" width="2.1" height="1.3" fill="#d4d4d4"/><rect x="2.1" y="63.6" width="1.1" height="1.3" fill="#d4d4d4"/><rect x="3.2" y="63.6" width="7.4" height="1.3" fill="#d4d4d4"/><rect x="10.5" y="63.6" width="1.1" height="1.3" fill="#d4d4d4"/><rect x="11.6" y="63.6" width="6.3" height="1.3" fill="#d4d4d4"/><rect x="17.9" y="63.6" width="1.1" height="1.3" fill="#d4d4d4"/><rect x="19.9" y="63.6" width="6.3" height="1.3" fill="#d4d4d4"/><rect x="26.2" y="63.6" width="1.1" height="1.3" fill="#d4d4d4"/><rect x="28.4" y="63.6" width="6.3" height="1.3" fill="#9cdcfe"/><rect x="34.6" y="63.6" width="1.1" height="1.3" fill="#d4d4d4"/><rect x="35.7" y="63.6" width="3.2" height="1.3" fill="#ce9178"/><rect x="38.9" y="63.6" width="1.1" height="1.3" fill="#d4d4d4"/><rect x="41.0" y="63.6" width="5.2" height="1.3" fill="#9cdcfe"/><rect x="46.2" y="63.6" width="1.1" height="1.3" fill="#d4d4d4"/><rect x="47.2" y="63.6" width="7.4" height="1.3" fill="#ce9178"/><rect x="54.6" y="63.6" width="1.1" height="1.3" fill="#d4d4d4"/><rect x="0.0" y="65.4" width="2.1" height="1.3" fill="#d4d4d4"/><rect x="2.1" y="65.4" width="1.1" height="1.3" fill="#d4d4d4"/><rect x="3.2" y="65.4" width="6.3" height="1.3" fill="#d4d4d4"/><rect x="9.5" y="65.4" width="2.1" height="1.3" fill="#d4d4d4"/><rect x="0.0" y="67.1" width="2.1" height="1.3" fill="#d4d4d4"/><rect x="2.1" y="67.1" width="1.1" height="1.3" fill="#d4d4d4"/><rect x="3.2" y="67.1" width="10.5" height="1.3" fill="#d4d4d4"/><rect x="13.7" y="67.1" width="1.1" height="1.3" fill="#d4d4d4"/><rect x="14.7" y="67.1" width="5.2" height="1.3" fill="#ce9178"/><rect x="21.0" y="67.1" width="7.4" height="1.3" fill="#ce9178"/><rect x="28.4" y="67.1" width="1.1" height="1.3" fill="#d4d4d4"/><rect x="0.0" y="70.5" width="1.1" height="1.3" fill="#6a9955"/><rect x="2.1" y="70.5" width="6.3" height="1.3" fill="#6a9955"/><rect x="9.5" y="70.5" width="3.2" height="1.3" fill="#6a9955"/><rect x="13.7" y="70.5" width="4.2" height="1.3" fill="#6a9955"/><rect x="18.9" y="70.5" width="4.2" height="1.3" fill="#6a9955"/><rect x="24.2" y="70.5" width="2.1" height="1.3" fill="#6a9955"/><rect x="27.3" y="70.5" width="4.2" height="1.3" fill="#6a9955"/><rect x="32.6" y="70.5" width="4.2" height="1.3" fill="#6a9955"/><rect x="37.8" y="70.5" width="3.2" height="1.3" fill="#6a9955"/><rect x="42.0" y="70.5" width="3.2" height="1.3" fill="#6a9955"/><rect x="46.2" y="70.5" width="7.4" height="1.3" fill="#6a9955"/><rect x="0.0" y="72.2" width="3.2" height="1.3" fill="#d4d4d4"/><rect x="3.2" y="72.2" width="1.1" height="1.3" fill="#d4d4d4"/><rect x="4.2" y="72.2" width="15.8" height="1.3" fill="#d4d4d4"/><rect x="19.9" y="72.2" width="1.1" height="1.3" fill="#d4d4d4"/><rect x="21.0" y="72.2" width="4.2" height="1.3" fill="#9cdcfe"/><rect x="25.2" y="72.2" width="1.1" height="1.3" fill="#d4d4d4"/><rect x="26.2" y="72.2" width="4.2" height="1.3" fill="#b5cea8"/><rect x="30.5" y="72.2" width="1.1" height="1.3" fill="#d4d4d4"/><rect x="32.6" y="72.2" width="6.3" height="1.3" fill="#9cdcfe"/><rect x="38.9" y="72.2" width="1.1" height="1.3" fill="#d4d4d4"/><rect x="39.9" y="72.2" width="4.2" height="1.3" fill="#b5cea8"/><rect x="44.1" y="72.2" width="1.1" height="1.3" fill="#d4d4d4"/><rect x="0.0" y="75.7" width="6.3" height="1.3" fill="#d4d4d4"/><rect x="7.4" y="75.7" width="1.1" height="1.3" fill="#d4d4d4"/><rect x="9.5" y="75.7" width="3.2" height="1.3" fill="#d4d4d4"/><rect x="12.6" y="75.7" width="1.1" height="1.3" fill="#d4d4d4"/><rect x="13.7" y="75.7" width="8.4" height="1.3" fill="#d4d4d4"/><rect x="22.1" y="75.7" width="2.1" height="1.3" fill="#d4d4d4"/><rect x="24.2" y="75.7" width="4.2" height="1.3" fill="#b5cea8"/><rect x="28.4" y="75.7" width="1.1" height="1.3" fill="#d4d4d4"/><rect x="30.5" y="75.7" width="3.2" height="1.3" fill="#b5cea8"/><rect x="33.6" y="75.7" width="1.1" height="1.3" fill="#d4d4d4"/><rect x="35.7" y="75.7" width="4.2" height="1.3" fill="#b5cea8"/><rect x="39.9" y="75.7" width="1.1" height="1.3" fill="#d4d4d4"/><rect x="42.0" y="75.7" width="4.2" height="1.3" fill="#b5cea8"/><rect x="46.2" y="75.7" width="2.1" height="1.3" fill="#d4d4d4"/><rect x="0.0" y="77.4" width="11.6" height="1.3" fill="#d4d4d4"/><rect x="12.6" y="77.4" width="1.1" height="1.3" fill="#d4d4d4"/><rect x="14.7" y="77.4" width="6.3" height="1.3" fill="#d4d4d4"/><rect x="21.0" y="77.4" width="1.1" height="1.3" fill="#d4d4d4"/><rect x="4.2" y="79.1" width="2.1" height="1.3" fill="#d4d4d4"/><rect x="6.3" y="79.1" width="1.1" height="1.3" fill="#d4d4d4"/><rect x="7.4" y="79.1" width="6.3" height="1.3" fill="#d4d4d4"/><rect x="13.7" y="79.1" width="1.1" height="1.3" fill="#d4d4d4"/><rect x="4.2" y="80.8" width="5.2" height="1.3" fill="#d4d4d4"/><rect x="9.5" y="80.8" width="1.1" height="1.3" fill="#d4d4d4"/><rect x="10.5" y="80.8" width="1.1" height="1.3" fill="#d4d4d4"/><rect x="11.6" y="80.8" width="9.5" height="1.3" fill="#ce9178"/><rect x="21.0" y="80.8" width="1.1" height="1.3" fill="#d4d4d4"/><rect x="4.2" y="82.6" width="6.3" height="1.3" fill="#d4d4d4"/><rect x="10.5" y="82.6" width="1.1" height="1.3" fill="#d4d4d4"/><rect x="11.6" y="82.6" width="1.1" height="1.3" fill="#b5cea8"/><rect x="12.6" y="82.6" width="1.1" height="1.3" fill="#d4d4d4"/><rect x="4.2" y="84.3" width="6.3" height="1.3" fill="#d4d4d4"/><rect x="10.5" y="84.3" width="1.1" height="1.3" fill="#d4d4d4"/><rect x="11.6" y="84.3" width="4.2" height="1.3" fill="#b5cea8"/><rect x="15.8" y="84.3" width="1.1" height="1.3" fill="#d4d4d4"/><rect x="4.2" y="86.0" width="7.4" height="1.3" fill="#d4d4d4"/><rect x="11.6" y="86.0" width="1.1" height="1.3" fill="#d4d4d4"/><rect x="12.6" y="86.0" width="4.2" height="1.3" fill="#d4d4d4"/><rect x="16.8" y="86.0" width="1.1" height="1.3" fill="#d4d4d4"/><rect x="0.0" y="87.7" width="1.1" height="1.3" fill="#d4d4d4"/><rect x="0.0" y="91.2" width="7.4" height="1.3" fill="#d4d4d4"/><rect x="8.4" y="91.2" width="1.1" height="1.3" fill="#d4d4d4"/><rect x="10.5" y="91.2" width="3.2" height="1.3" fill="#d4d4d4"/><rect x="13.7" y="91.2" width="1.1" height="1.3" fill="#d4d4d4"/><rect x="14.7" y="91.2" width="8.4" height="1.3" fill="#d4d4d4"/><rect x="23.1" y="91.2" width="2.1" height="1.3" fill="#d4d4d4"/><rect x="25.2" y="91.2" width="4.2" height="1.3" fill="#b5cea8"/><rect x="29.4" y="91.2" width="1.1" height="1.3" fill="#d4d4d4"/><rect x="31.5" y="91.2" width="4.2" height="1.3" fill="#b5cea8"/><rect x="35.7" y="91.2" width="1.1" height="1.3" fill="#d4d4d4"/><rect x="37.8" y="91.2" width="4.2" height="1.3" fill="#b5cea8"/><rect x="42.0" y="91.2" width="1.1" height="1.3" fill="#d4d4d4"/><rect x="44.1" y="91.2" width="4.2" height="1.3" fill="#b5cea8"/><rect x="48.3" y="91.2" width="2.1" height="1.3" fill="#d4d4d4"/><rect x="0.0" y="92.9" width="12.6" height="1.3" fill="#d4d4d4"/><rect x="13.7" y="92.9" width="1.1" height="1.3" fill="#d4d4d4"/><rect x="15.8" y="92.9" width="6.3" height="1.3" fill="#d4d4d4"/><rect x="22.1" y="92.9" width="1.1" height="1.3" fill="#d4d4d4"/><rect x="4.2" y="94.6" width="2.1" height="1.3" fill="#d4d4d4"/><rect x="6.3" y="94.6" width="1.1" height="1.3" fill="#d4d4d4"/><rect x="7.4" y="94.6" width="7.4" height="1.3" fill="#d4d4d4"/><rect x="14.7" y="94.6" width="1.1" height="1.3" fill="#d4d4d4"/><rect x="4.2" y="96.3" width="5.2" height="1.3" fill="#d4d4d4"/><rect x="9.5" y="96.3" width="1.1" height="1.3" fill="#d4d4d4"/><rect x="10.5" y="96.3" width="1.1" height="1.3" fill="#d4d4d4"/><rect x="11.6" y="96.3" width="10.5" height="1.3" fill="#ce9178"/><rect x="22.1" y="96.3" width="1.1" height="1.3" fill="#d4d4d4"/><rect x="4.2" y="98.0" width="6.3" height="1.3" fill="#d4d4d4"/><rect x="10.5" y="98.0" width="1.1" height="1.3" fill="#d4d4d4"/><rect x="11.6" y="98.0" width="1.1" height="1.3" fill="#b5cea8"/><rect x="12.6" y="98.0" width="1.1" height="1.3" fill="#d4d4d4"/><rect x="4.2" y="99.8" width="6.3" height="1.3" fill="#d4d4d4"/><rect x="10.5" y="99.8" width="1.1" height="1.3" fill="#d4d4d4"/><rect x="11.6" y="99.8" width="1.1" height="1.3" fill="#b5cea8"/><rect x="12.6" y="99.8" width="1.1" height="1.3" fill="#d4d4d4"/><rect x="4.2" y="101.5" width="7.4" height="1.3" fill="#d4d4d4"/><rect x="11.6" y="101.5" width="1.1" height="1.3" fill="#d4d4d4"/><rect x="12.6" y="101.5" width="5.2" height="1.3" fill="#d4d4d4"/><rect x="17.9" y="101.5" width="1.1" height="1.3" fill="#d4d4d4"/><rect x="0.0" y="103.2" width="1.1" height="1.3" fill="#d4d4d4"/><rect x="0.0" y="106.6" width="3.2" height="1.3" fill="#c586c0"/><rect x="4.2" y="106.6" width="6.3" height="1.3" fill="#d4d4d4"/><rect x="10.5" y="106.6" width="1.1" height="1.3" fill="#d4d4d4"/><rect x="11.6" y="106.6" width="3.2" height="1.3" fill="#d4d4d4"/><rect x="14.7" y="106.6" width="2.1" height="1.3" fill="#d4d4d4"/><rect x="4.2" y="108.4" width="1.1" height="1.3" fill="#d4d4d4"/><rect x="5.2" y="108.4" width="1.1" height="1.3" fill="#d4d4d4"/><rect x="7.4" y="108.4" width="1.1" height="1.3" fill="#d4d4d4"/><rect x="8.4" y="108.4" width="1.1" height="1.3" fill="#d4d4d4"/><rect x="10.5" y="108.4" width="1.1" height="1.3" fill="#d4d4d4"/><rect x="12.6" y="108.4" width="1.1" height="1.3" fill="#d4d4d4"/><rect x="14.7" y="108.4" width="9.5" height="1.3" fill="#d4d4d4"/><rect x="24.2" y="108.4" width="1.1" height="1.3" fill="#d4d4d4"/><rect x="25.2" y="108.4" width="11.6" height="1.3" fill="#d4d4d4"/><rect x="36.8" y="108.4" width="1.1" height="1.3" fill="#d4d4d4"/><rect x="38.9" y="108.4" width="1.1" height="1.3" fill="#d4d4d4"/><rect x="39.9" y="108.4" width="1.1" height="1.3" fill="#d4d4d4"/><rect x="42.0" y="108.4" width="11.6" height="1.3" fill="#d4d4d4"/><rect x="53.6" y="108.4" width="1.1" height="1.3" fill="#d4d4d4"/><rect x="54.6" y="108.4" width="3.2" height="1.3" fill="#d4d4d4"/><rect x="57.8" y="108.4" width="1.1" height="1.3" fill="#d4d4d4"/><rect x="59.9" y="108.4" width="12.6" height="1.3" fill="#d4d4d4"/><rect x="72.5" y="108.4" width="1.1" height="1.3" fill="#d4d4d4"/><rect x="73.5" y="108.4" width="3.2" height="1.3" fill="#d4d4d4"/><rect x="76.7" y="108.4" width="1.1" height="1.3" fill="#d4d4d4"/><rect x="4.2" y="110.1" width="5.2" height="1.3" fill="#d4d4d4"/><rect x="9.5" y="110.1" width="1.1" height="1.3" fill="#d4d4d4"/><rect x="10.5" y="110.1" width="9.5" height="1.3" fill="#d4d4d4"/><rect x="19.9" y="110.1" width="1.1" height="1.3" fill="#d4d4d4"/><rect x="21.0" y="110.1" width="1.1" height="1.3" fill="#d4d4d4"/><rect x="22.1" y="110.1" width="2.1" height="1.3" fill="#d4d4d4"/><rect x="25.2" y="110.1" width="5.2" height="1.3" fill="#d4d4d4"/><rect x="30.5" y="110.1" width="1.1" height="1.3" fill="#d4d4d4"/><rect x="31.5" y="110.1" width="9.5" height="1.3" fill="#d4d4d4"/><rect x="41.0" y="110.1" width="1.1" height="1.3" fill="#d4d4d4"/><rect x="42.0" y="110.1" width="1.1" height="1.3" fill="#d4d4d4"/><rect x="43.1" y="110.1" width="2.1" height="1.3" fill="#d4d4d4"/><rect x="46.2" y="110.1" width="5.2" height="1.3" fill="#d4d4d4"/><rect x="51.5" y="110.1" width="1.1" height="1.3" fill="#d4d4d4"/><rect x="52.5" y="110.1" width="9.5" height="1.3" fill="#d4d4d4"/><rect x="62.0" y="110.1" width="1.1" height="1.3" fill="#d4d4d4"/><rect x="63.0" y="110.1" width="1.1" height="1.3" fill="#d4d4d4"/><rect x="64.0" y="110.1" width="1.1" height="1.3" fill="#d4d4d4"/><rect x="4.2" y="111.8" width="3.2" height="1.3" fill="#d4d4d4"/><rect x="7.4" y="111.8" width="1.1" height="1.3" fill="#d4d4d4"/><rect x="8.4" y="111.8" width="6.3" height="1.3" fill="#d4d4d4"/><rect x="14.7" y="111.8" width="1.1" height="1.3" fill="#d4d4d4"/><rect x="15.8" y="111.8" width="9.5" height="1.3" fill="#d4d4d4"/><rect x="25.2" y="111.8" width="2.1" height="1.3" fill="#d4d4d4"/><rect x="0.0" y="115.2" width="11.6" height="1.3" fill="#d4d4d4"/><rect x="11.6" y="115.2" width="1.1" height="1.3" fill="#d4d4d4"/><rect x="12.6" y="115.2" width="10.5" height="1.3" fill="#d4d4d4"/><rect x="23.1" y="115.2" width="1.1" height="1.3" fill="#d4d4d4"/><rect x="24.2" y="115.2" width="6.3" height="1.3" fill="#d4d4d4"/><rect x="30.5" y="115.2" width="1.1" height="1.3" fill="#d4d4d4"/><rect x="0.0" y="117.0" width="12.6" height="1.3" fill="#d4d4d4"/><rect x="12.6" y="117.0" width="1.1" height="1.3" fill="#d4d4d4"/><rect x="13.7" y="117.0" width="10.5" height="1.3" fill="#d4d4d4"/><rect x="24.2" y="117.0" width="1.1" height="1.3" fill="#d4d4d4"/><rect x="25.2" y="117.0" width="6.3" height="1.3" fill="#d4d4d4"/><rect x="31.5" y="117.0" width="1.1" height="1.3" fill="#d4d4d4"/><rect x="0.0" y="118.7" width="7.4" height="1.3" fill="#d4d4d4"/><rect x="8.4" y="118.7" width="1.1" height="1.3" fill="#d4d4d4"/><rect x="10.5" y="118.7" width="3.2" height="1.3" fill="#d4d4d4"/><rect x="13.7" y="118.7" width="1.1" height="1.3" fill="#d4d4d4"/><rect x="14.7" y="118.7" width="8.4" height="1.3" fill="#d4d4d4"/><rect x="23.1" y="118.7" width="2.1" height="1.3" fill="#d4d4d4"/><rect x="25.2" y="118.7" width="3.2" height="1.3" fill="#b5cea8"/><rect x="28.4" y="118.7" width="1.1" height="1.3" fill="#d4d4d4"/><rect x="30.5" y="118.7" width="5.2" height="1.3" fill="#b5cea8"/><rect x="35.7" y="118.7" width="1.1" height="1.3" fill="#d4d4d4"/><rect x="37.8" y="118.7" width="3.2" height="1.3" fill="#b5cea8"/><rect x="41.0" y="118.7" width="1.1" height="1.3" fill="#d4d4d4"/><rect x="43.1" y="118.7" width="4.2" height="1.3" fill="#b5cea8"/><rect x="47.2" y="118.7" width="2.1" height="1.3" fill="#d4d4d4"/><rect x="0.0" y="120.4" width="6.3" height="1.3" fill="#d4d4d4"/><rect x="7.4" y="120.4" width="1.1" height="1.3" fill="#d4d4d4"/><rect x="9.5" y="120.4" width="6.3" height="1.3" fill="#d4d4d4"/><rect x="15.8" y="120.4" width="1.1" height="1.3" fill="#d4d4d4"/><rect x="16.8" y="120.4" width="7.4" height="1.3" fill="#d4d4d4"/><rect x="24.2" y="120.4" width="1.1" height="1.3" fill="#d4d4d4"/><rect x="26.2" y="120.4" width="7.4" height="1.3" fill="#ce9178"/><rect x="33.6" y="120.4" width="1.1" height="1.3" fill="#d4d4d4"/><rect x="35.7" y="120.4" width="10.5" height="1.3" fill="#9cdcfe"/><rect x="46.2" y="120.4" width="1.1" height="1.3" fill="#d4d4d4"/><rect x="47.2" y="120.4" width="7.4" height="1.3" fill="#ce9178"/><rect x="54.6" y="120.4" width="1.1" height="1.3" fill="#d4d4d4"/><rect x="0.0" y="122.1" width="3.2" height="1.3" fill="#c586c0"/><rect x="4.2" y="122.1" width="5.2" height="1.3" fill="#d4d4d4"/><rect x="9.5" y="122.1" width="1.1" height="1.3" fill="#d4d4d4"/><rect x="10.5" y="122.1" width="5.2" height="1.3" fill="#d4d4d4"/><rect x="15.8" y="122.1" width="2.1" height="1.3" fill="#d4d4d4"/><rect x="4.2" y="123.8" width="11.6" height="1.3" fill="#d4d4d4"/><rect x="15.8" y="123.8" width="1.1" height="1.3" fill="#d4d4d4"/><rect x="16.8" y="123.8" width="5.2" height="1.3" fill="#d4d4d4"/><rect x="22.1" y="123.8" width="2.1" height="1.3" fill="#d4d4d4"/><rect x="4.2" y="125.6" width="12.6" height="1.3" fill="#d4d4d4"/><rect x="16.8" y="125.6" width="1.1" height="1.3" fill="#d4d4d4"/><rect x="17.9" y="125.6" width="5.2" height="1.3" fill="#d4d4d4"/><rect x="23.1" y="125.6" width="2.1" height="1.3" fill="#d4d4d4"/><rect x="0.0" y="127.3" width="6.3" height="1.3" fill="#d4d4d4"/><rect x="6.3" y="127.3" width="1.1" height="1.3" fill="#d4d4d4"/><rect x="7.4" y="127.3" width="10.5" height="1.3" fill="#d4d4d4"/><rect x="17.9" y="127.3" width="1.1" height="1.3" fill="#d4d4d4"/><rect x="18.9" y="127.3" width="5.2" height="1.3" fill="#d4d4d4"/><rect x="24.2" y="127.3" width="1.1" height="1.3" fill="#d4d4d4"/><rect x="0.0" y="129.0" width="3.2" height="1.3" fill="#d4d4d4"/><rect x="3.2" y="129.0" width="1.1" height="1.3" fill="#d4d4d4"/><rect x="4.2" y="129.0" width="4.2" height="1.3" fill="#d4d4d4"/><rect x="8.4" y="129.0" width="2.1" height="1.3" fill="#d4d4d4"/></svg>
<div class="a" style="left:1267px;top:84px;width:1px;height:528px;background:#353535"></div>
<div class="a" style="left:1268px;top:263px;width:12px;height:117px;background:#424242"></div>
<div class="a" style="left:1276px;top:82px;width:4px;height:7px;background:#3794ff"></div>
<div class="a" style="left:1276px;top:95px;width:4px;height:6px;background:#3794ff"></div>
<div class="a" style="left:1276px;top:102px;width:4px;height:7px;background:#3794ff"></div>
<div class="a" style="left:1276px;top:222px;width:4px;height:13px;background:#3794ff"></div>
<div class="a" style="left:1276px;top:306px;width:4px;height:6px;background:#3794ff"></div>
<div class="a" style="left:1276px;top:330px;width:4px;height:6px;background:#3794ff"></div>
<div class="a" style="left:1276px;top:342px;width:4px;height:10px;background:#3794ff"></div>
<div class="a" style="left:1276px;top:370px;width:4px;height:10px;background:#3794ff"></div>
<div class="a" style="left:1276px;top:383px;width:4px;height:14px;background:#3794ff"></div>
<div class="a" style="left:1276px;top:417px;width:4px;height:14px;background:#3794ff"></div>
<div class="a" style="left:1276px;top:453px;width:4px;height:14px;background:#3794ff"></div>
<div class="a" style="left:275px;top:612px;width:1005px;height:224px;background:#1e1e1e"></div>
<div class="a" style="left:275px;top:612px;width:1005px;height:1px;background:#3a3a3a"></div>
<div class="t" style="left:294.0px;top:626px;font-size:10.3px;color:#a0a0a0;transform:scaleX(0.9);transform-origin:0 0">PROBLEMS</div>
<div class="t" style="left:396.79999999999995px;top:626px;font-size:10.3px;color:#a0a0a0;transform:scaleX(0.9);transform-origin:0 0">OUTPUT</div>
<div class="t" style="left:459.4px;top:626px;font-size:10.3px;color:#a0a0a0;transform:scaleX(0.9);transform-origin:0 0">DEBUG CONSOLE</div>
<div class="t" style="left:564.9px;top:626px;font-size:10.3px;color:#e7e7e7;transform:scaleX(0.9);transform-origin:0 0">TERMINAL</div>
<div class="a" style="left:356px;top:620px;width:20px;height:20px;border-radius:10px;background:#4d4d4d"></div>
<div class="t" style="left:356px;width:20px;text-align:center;top:625px;font-size:10px;color:#f0f0f0">25</div>
<div class="a" style="left:563px;top:641.5px;width:60px;height:1.2px;background:#e7e7e7"></div>
<div class="a" style="left:275px;top:645px;width:333px;height:80px;overflow:hidden">
<div class="t mono" style="left:19.2px;top:8.8px;font-size:11.73px"><span class="b3" style="color:#cccccc">PS E:\OneDrive\Codes\Mini Research&gt; &amp; </span><span class="b3" style="color:#e5e510">C:/WinPython/python-3.10.5.amd64/python.exe</span></div>
<div class="t mono" style="left:19.2px;top:24.0px;font-size:11.73px"><span class="b3" style="color:#29a8cd">amper Oscillator Interactive.py</span><span class="b3" style="color:#a7c9d6">&quot;</span></div>
<div class="t mono" style="left:19.2px;top:39.2px;font-size:11.73px"><span class="b3" style="color:#cccccc">PS E:\OneDrive\Codes\Mini Research&gt; &amp; </span><span class="b3" style="color:#e5e510">C:/WinPython/python-3.10.5.amd64/python.exe</span></div>
<div class="t mono" style="left:19.2px;top:54.6px;font-size:11.73px"><span class="b3" style="color:#29a8cd">IR-Fitting.py</span><span class="b3" style="color:#a7c9d6">&quot;</span></div>
</div>
<div class="a" style="left:1166px;top:700px;width:1px;height:135px;background:#363636"></div>
<div class="a" style="left:1193px;top:613px;width:87px;height:223px;background:#1e1e1e"></div>
<svg class="a" style="left:1190px;top:620px" width="90" height="20"><g fill="none" stroke="#c5c5c5" stroke-width="1.2">
<path d="M12.5 2.5 V16 M5.5 9.2 H19.5"/><path d="M26 8 L29 11 L32 8"/><path d="M46 12 L51 7 L56 12"/><path d="M67 4.5 L76 13.5 M76 4.5 L67 13.5"/></g></svg>
<div class="a" style="left:1193px;top:731px;width:87px;height:21px;background:#37373d"></div>
<div class="t b2" style="left:1195.5px;top:651.8px;font-size:12.2px;color:#cccccc">Python</div>
<div class="t b2" style="left:1195.5px;top:672.8px;font-size:12.2px;color:#cccccc">Python</div>
<div class="t b2" style="left:1195.5px;top:693.8px;font-size:12.2px;color:#cccccc">Python</div>
<div class="t b2" style="left:1195.5px;top:714.8px;font-size:12.2px;color:#cccccc">Python</div>
<div class="t b2" style="left:1195.5px;top:735.8px;font-size:12.2px;color:#cccccc">Python</div>
<div class="a" style="left:0;top:835.5px;width:1280px;height:21.5px;background:#007acc"></div>
<div class="a" style="left:0;top:855.5px;width:1280px;height:1.5px;background:#285a78"></div>
<svg class="a" style="left:0;top:836px" width="110" height="21"><g fill="none" stroke="#ffffff" stroke-width="1.1">
<circle cx="19.5" cy="10.5" r="5.5"/><path d="M17 8 L22 13 M22 8 L17 13"/>
<path d="M46 4.5 L52 15.5 H40 Z"/><path d="M46 8.5 V12"/>
<circle cx="72" cy="10.5" r="5.5"/><path d="M72 9.5 V13.5"/></g>
<circle cx="72" cy="7.5" r="0.8" fill="#fff"/><circle cx="46" cy="13.8" r="0.6" fill="#fff"/>
</svg>
<div class="t" style="left:30px;top:840.5px;font-size:11px;color:#ffffff">0</div>
<div class="t" style="left:56px;top:840.5px;font-size:11px;color:#ffffff">0</div>
<div class="t" style="left:82px;top:840.5px;font-size:11px;color:#ffffff">25</div>
<div class="t" style="left:788.0px;top:840.5px;font-size:11px;color:#ffffff">Ln 1, Col 1</div>
<div class="t" style="left:855.4px;top:840.5px;font-size:11px;color:#ffffff">Spaces: 4</div>
<div class="t" style="left:918.1px;top:840.5px;font-size:11px;color:#ffffff">UTF-8</div>
<div class="t" style="left:963.8px;top:840.5px;font-size:11px;color:#ffffff">CRLF</div>
<div class="t" style="left:1004.8px;top:840.5px;font-size:11px;color:#ffffff">{ }</div>
<div class="t" style="left:1021.4px;top:840.5px;font-size:11px;color:#ffffff">Python</div>
<div class="t" style="left:1072.4px;top:840.5px;font-size:11px;color:#ffffff">3.10.5 64-bit</div>
<div class="t" style="left:1168.1000000000001px;top:840.5px;font-size:11px;color:#ffffff">25 Spell</div>
<svg class="a" style="left:1150px;top:836px" width="130" height="21"><g fill="none" stroke="#ffffff" stroke-width="1.1">
<path d="M9 5 L15 16 H3 Z"/><path d="M9 9 V12.5"/>
<path d="M77 5.5 h7 a2 2 0 0 1 2 2 v3 a2 2 0 0 1 -2 2 h-3 l-3 3 v-3 " /><circle cx="77" cy="9" r="2.2"/><path d="M73 16 c0 -3 8 -3 8 0"/>
<path d="M108 15 h9 M109.5 14 v-4.5 a3 3 0 0 1 6 0 v4.5 M111.5 16.5 h2"/>
</g></svg>
<div class="a" style="left:607.5px;top:330px;width:585.5px;height:480px;background:#ffffff;border-radius:6px;overflow:hidden;box-shadow:0 0 1px #000">
<div class="a" style="left:0;top:0;width:100%;height:22.5px;background:#eef1f9"></div>
<div class="a" style="left:0;top:453.29999999999995px;width:100%;height:30px;background:#f0f0f0"></div>
</div>
<svg class="a" style="left:613px;top:334.5px" width="14" height="14"><circle cx="6.8" cy="6.9" r="5.8" fill="#fbf8ef" stroke="#6e7784" stroke-width="1" stroke-dasharray="1.6 1.6"/>
<path d="M6.8 6.9 L3.2 2.8 A5 5 0 0 1 6.3 1.8 Z" fill="#b08858"/><path d="M6.8 6.9 L2.2 5.2 A5 5 0 0 1 3.4 3 Z" fill="#d8b890"/><path d="M6.8 6.9 L9.6 11 L10.6 10 Z" fill="#5a6a6a"/><circle cx="7" cy="7.3" r="1.6" fill="#6a5528"/></svg>
<div class="t" style="left:629.5px;top:337px;font-size:9.4px;color:#1a1a1a">Figure 1</div>
<svg class="a" style="left:1085px;top:330px" width="108" height="23"><g fill="none" stroke="#3a3a3a" stroke-width="1">
<path d="M10 11.5 H18.5"/><rect x="47.5" y="7.5" width="8" height="8" rx="1"/><path d="M85.5 7 L94 15.5 M94 7 L85.5 15.5"/></g></svg>
<svg class="a" style="left:0;top:0" width="1280" height="857" viewBox="0 0 1280 857"><defs><clipPath id="ax"><rect x="754.4" y="405.8" width="380.9" height="269.8"/></clipPath></defs><g clip-path="url(#ax)" fill="none" stroke-width="1.9" stroke-linejoin="round"><path d="M771.50,418.01 L773.22,419.23 L774.95,420.48 L776.67,421.74 L778.40,423.02 L780.12,424.33 L781.85,425.66 L783.57,427.00 L785.29,428.37 L787.02,429.75 L788.74,431.16 L790.47,432.58 L792.19,434.02 L793.92,435.48 L795.64,436.95 L797.36,438.45 L799.09,439.95 L800.81,441.47 L802.54,443.01 L804.26,444.55 L805.99,446.11 L807.71,447.68 L809.43,449.27 L811.16,450.86 L812.88,452.46 L814.61,454.07 L816.33,455.68 L818.06,457.30 L819.78,458.93 L821.50,460.56 L823.23,462.19 L824.95,463.83 L826.68,465.47 L828.40,467.11 L830.13,468.75 L831.85,470.39 L833.58,472.02 L835.30,473.65 L837.02,475.28 L838.75,476.91 L840.47,478.52 L842.20,480.13 L843.92,481.74 L845.65,483.33 L847.37,484.92 L849.09,486.50 L850.82,488.06 L852.54,489.62 L854.27,491.16 L855.99,492.69 L857.72,494.21 L859.44,495.72 L861.16,497.21 L862.89,498.68 L864.61,500.14 L866.34,501.59 L868.06,503.02 L869.79,504.43 L871.51,505.82 L873.23,507.20 L874.96,508.56 L876.68,509.90 L878.41,511.23 L880.13,512.53 L881.86,513.82 L883.58,515.09 L885.30,516.34 L887.03,517.57 L888.75,518.78 L890.48,519.98 L892.20,521.15 L893.93,522.30 L895.65,523.44 L897.37,524.56 L899.10,525.65 L900.82,526.73 L902.55,527.79 L904.27,528.83 L906.00,529.85 L907.72,530.85 L909.44,531.84 L911.17,532.80 L912.89,533.75 L914.62,534.68 L916.34,535.59 L918.07,536.48 L919.79,537.36 L921.51,538.22 L923.24,539.06 L924.96,539.88 L926.69,540.69 L928.41,541.48 L930.14,542.25 L931.86,543.01 L933.59,543.75 L935.31,544.48 L937.03,545.19 L938.76,545.89 L940.48,546.57 L942.21,547.24 L943.93,547.89 L945.66,548.53 L947.38,549.15 L949.10,549.76 L950.83,550.36 L952.55,550.94 L954.28,551.51 L956.00,552.07 L957.73,552.61 L959.45,553.15 L961.17,553.67 L962.90,554.18 L964.62,554.67 L966.35,555.16 L968.07,555.64 L969.80,556.10 L971.52,556.55 L973.24,557.00 L974.97,557.43 L976.69,557.85 L978.42,558.27 L980.14,558.67 L981.87,559.06 L983.59,559.45 L985.31,559.83 L987.04,560.19 L988.76,560.55 L990.49,560.90 L992.21,561.24 L993.94,561.58 L995.66,561.90 L997.38,562.22 L999.11,562.53 L1000.83,562.84 L1002.56,563.13 L1004.28,563.42 L1006.01,563.71 L1007.73,563.98 L1009.45,564.25 L1011.18,564.51 L1012.90,564.77 L1014.63,565.02 L1016.35,565.27 L1018.08,565.50 L1019.80,565.74 L1021.52,565.96 L1023.25,566.19 L1024.97,566.40 L1026.70,566.62 L1028.42,566.82 L1030.15,567.02 L1031.87,567.22 L1033.60,567.41 L1035.32,567.60 L1037.04,567.78 L1038.77,567.96 L1040.49,568.13 L1042.22,568.30 L1043.94,568.47 L1045.67,568.63 L1047.39,568.79 L1049.11,568.94 L1050.84,569.09 L1052.56,569.24 L1054.29,569.38 L1056.01,569.52 L1057.74,569.66 L1059.46,569.79 L1061.18,569.92 L1062.91,570.05 L1064.63,570.17 L1066.36,570.29 L1068.08,570.41 L1069.81,570.53 L1071.53,570.64 L1073.25,570.75 L1074.98,570.85 L1076.70,570.96 L1078.43,571.06 L1080.15,571.16 L1081.88,571.26 L1083.60,571.35 L1085.32,571.44 L1087.05,571.53 L1088.77,571.62 L1090.50,571.71 L1092.22,571.79 L1093.95,571.87 L1095.67,571.95 L1097.39,572.03 L1099.12,572.10 L1100.84,572.18 L1102.57,572.25 L1104.29,572.32 L1106.02,572.39 L1107.74,572.45 L1109.46,572.52 L1111.19,572.58 L1112.91,572.65 L1114.64,572.71 L1116.36,572.77 L1116.36,572.77" stroke="#0000ff"/><path d="M771.50,647.09 L773.22,646.71 L774.95,646.33 L776.67,645.95 L778.40,645.57 L780.12,645.19 L781.85,644.81 L783.57,644.42 L785.29,644.04 L787.02,643.66 L788.74,643.27 L790.47,642.89 L792.19,642.51 L793.92,642.13 L795.64,641.76 L797.36,641.39 L799.09,641.02 L800.81,640.66 L802.54,640.30 L804.26,639.95 L805.99,639.60 L807.71,639.26 L809.43,638.92 L811.16,638.60 L812.88,638.28 L814.61,637.97 L816.33,637.66 L818.06,637.37 L819.78,637.09 L821.50,636.81 L823.23,636.55 L824.95,636.30 L826.68,636.06 L828.40,635.83 L830.13,635.61 L831.85,635.40 L833.58,635.21 L835.30,635.03 L837.02,634.86 L838.75,634.71 L840.47,634.57 L842.20,634.44 L843.92,634.32 L845.65,634.22 L847.37,634.14 L849.09,634.06 L850.82,634.01 L852.54,633.96 L854.27,633.93 L855.99,633.91 L857.72,633.91 L859.44,633.92 L861.16,633.94 L862.89,633.98 L864.61,634.03 L866.34,634.09 L868.06,634.16 L869.79,634.25 L871.51,634.35 L873.23,634.46 L874.96,634.58 L876.68,634.71 L878.41,634.86 L880.13,635.01 L881.86,635.18 L883.58,635.35 L885.30,635.54 L887.03,635.73 L888.75,635.94 L890.48,636.15 L892.20,636.37 L893.93,636.59 L895.65,636.83 L897.37,637.07 L899.10,637.32 L900.82,637.57 L902.55,637.83 L904.27,638.10 L906.00,638.37 L907.72,638.64 L909.44,638.92 L911.17,639.20 L912.89,639.49 L914.62,639.78 L916.34,640.07 L918.07,640.37 L919.79,640.67 L921.51,640.97 L923.24,641.27 L924.96,641.57 L926.69,641.88 L928.41,642.18 L930.14,642.49 L931.86,642.79 L933.59,643.10 L935.31,643.41 L937.03,643.71 L938.76,644.02 L940.48,644.32 L942.21,644.63 L943.93,644.93 L945.66,645.23 L947.38,645.53 L949.10,645.83 L950.83,646.12 L952.55,646.42 L954.28,646.71 L956.00,647.00 L957.73,647.28 L959.45,647.57 L961.17,647.85 L962.90,648.13 L964.62,648.41 L966.35,648.68 L968.07,648.95 L969.80,649.22 L971.52,649.48 L973.24,649.75 L974.97,650.00 L976.69,650.26 L978.42,650.51 L980.14,650.76 L981.87,651.01 L983.59,651.25 L985.31,651.49 L987.04,651.72 L988.76,651.95 L990.49,652.18 L992.21,652.41 L993.94,652.63 L995.66,652.85 L997.38,653.06 L999.11,653.27 L1000.83,653.48 L1002.56,653.68 L1004.28,653.88 L1006.01,654.08 L1007.73,654.28 L1009.45,654.47 L1011.18,654.65 L1012.90,654.84 L1014.63,655.02 L1016.35,655.20 L1018.08,655.37 L1019.80,655.54 L1021.52,655.71 L1023.25,655.87 L1024.97,656.04 L1026.70,656.19 L1028.42,656.35 L1030.15,656.50 L1031.87,656.65 L1033.60,656.80 L1035.32,656.94 L1037.04,657.08 L1038.77,657.22 L1040.49,657.36 L1042.22,657.49 L1043.94,657.62 L1045.67,657.75 L1047.39,657.87 L1049.11,658.00 L1050.84,658.11 L1052.56,658.23 L1054.29,658.35 L1056.01,658.46 L1057.74,658.57 L1059.46,658.68 L1061.18,658.78 L1062.91,658.89 L1064.63,658.99 L1066.36,659.09 L1068.08,659.18 L1069.81,659.28 L1071.53,659.37 L1073.25,659.46 L1074.98,659.55 L1076.70,659.64 L1078.43,659.72 L1080.15,659.81 L1081.88,659.89 L1083.60,659.97 L1085.32,660.04 L1087.05,660.12 L1088.77,660.19 L1090.50,660.27 L1092.22,660.34 L1093.95,660.41 L1095.67,660.47 L1097.39,660.54 L1099.12,660.61 L1100.84,660.67 L1102.57,660.73 L1104.29,660.79 L1106.02,660.85 L1107.74,660.91 L1109.46,660.96 L1111.19,661.02 L1112.91,661.07 L1114.64,661.13 L1116.36,661.18 L1116.36,661.18" stroke="#ff0000" stroke-opacity="0.95"/><path d="M771.50,663.30 L773.22,662.46 L774.95,661.59 L776.67,660.71 L778.40,659.80 L780.12,658.88 L781.85,657.94 L783.57,656.98 L785.29,655.99 L787.02,654.99 L788.74,653.97 L790.47,652.93 L792.19,651.87 L793.92,650.79 L795.64,649.69 L797.36,648.57 L799.09,647.43 L800.81,646.27 L802.54,645.10 L804.26,643.90 L805.99,642.69 L807.71,641.46 L809.43,640.21 L811.16,638.95 L812.88,637.67 L814.61,636.37 L816.33,635.06 L818.06,633.73 L819.78,632.39 L821.50,631.03 L823.23,629.66 L824.95,628.27 L826.68,626.87 L828.40,625.46 L830.13,624.04 L831.85,622.61 L833.58,621.17 L835.30,619.72 L837.02,618.26 L838.75,616.79 L840.47,615.31 L842.20,613.83 L843.92,612.34 L845.65,610.84 L847.37,609.34 L849.09,607.84 L850.82,606.33 L852.54,604.82 L854.27,603.31 L855.99,601.79 L857.72,600.28 L859.44,598.77 L861.16,597.25 L862.89,595.74 L864.61,594.23 L866.34,592.73 L868.06,591.22 L869.79,589.72 L871.51,588.23 L873.23,586.74 L874.96,585.26 L876.68,583.78 L878.41,582.31 L880.13,580.85 L881.86,579.40 L883.58,577.95 L885.30,576.52 L887.03,575.09 L888.75,573.68 L890.48,572.28 L892.20,570.88 L893.93,569.50 L895.65,568.13 L897.37,566.77 L899.10,565.43 L900.82,564.10 L902.55,562.78 L904.27,561.47 L906.00,560.18 L907.72,558.90 L909.44,557.64 L911.17,556.39 L912.89,555.16 L914.62,553.94 L916.34,552.74 L918.07,551.55 L919.79,550.37 L921.51,549.21 L923.24,548.07 L924.96,546.94 L926.69,545.83 L928.41,544.74 L930.14,543.66 L931.86,542.59 L933.59,541.54 L935.31,540.51 L937.03,539.50 L938.76,538.49 L940.48,537.51 L942.21,536.54 L943.93,535.58 L945.66,534.65 L947.38,533.72 L949.10,532.81 L950.83,531.92 L952.55,531.04 L954.28,530.18 L956.00,529.34 L957.73,528.50 L959.45,527.69 L961.17,526.88 L962.90,526.09 L964.62,525.32 L966.35,524.56 L968.07,523.81 L969.80,523.08 L971.52,522.36 L973.24,521.66 L974.97,520.97 L976.69,520.29 L978.42,519.62 L980.14,518.97 L981.87,518.33 L983.59,517.70 L985.31,517.09 L987.04,516.49 L988.76,515.90 L990.49,515.32 L992.21,514.75 L993.94,514.19 L995.66,513.65 L997.38,513.12 L999.11,512.60 L1000.83,512.08 L1002.56,511.58 L1004.28,511.09 L1006.01,510.61 L1007.73,510.14 L1009.45,509.68 L1011.18,509.23 L1012.90,508.79 L1014.63,508.36 L1016.35,507.94 L1018.08,507.53 L1019.80,507.12 L1021.52,506.73 L1023.25,506.34 L1024.97,505.96 L1026.70,505.59 L1028.42,505.23 L1030.15,504.87 L1031.87,504.53 L1033.60,504.19 L1035.32,503.86 L1037.04,503.53 L1038.77,503.22 L1040.49,502.91 L1042.22,502.61 L1043.94,502.31 L1045.67,502.02 L1047.39,501.74 L1049.11,501.46 L1050.84,501.19 L1052.56,500.93 L1054.29,500.67 L1056.01,500.42 L1057.74,500.17 L1059.46,499.93 L1061.18,499.69 L1062.91,499.46 L1064.63,499.24 L1066.36,499.02 L1068.08,498.81 L1069.81,498.60 L1071.53,498.39 L1073.25,498.19 L1074.98,498.00 L1076.70,497.80 L1078.43,497.62 L1080.15,497.44 L1081.88,497.26 L1083.60,497.08 L1085.32,496.91 L1087.05,496.75 L1088.77,496.59 L1090.50,496.43 L1092.22,496.27 L1093.95,496.12 L1095.67,495.98 L1097.39,495.83 L1099.12,495.69 L1100.84,495.55 L1102.57,495.42 L1104.29,495.29 L1106.02,495.16 L1107.74,495.04 L1109.46,494.92 L1111.19,494.80 L1112.91,494.68 L1114.64,494.57 L1116.36,494.46 L1116.36,494.46" stroke="#008000"/><path d="M767.5,643.7 L775.5,651.7 M775.5,643.7 L767.5,651.7" stroke="#ff0000" stroke-width="1.8"/><path d="M816.8,636.2 L824.8,644.2 M824.8,636.2 L816.8,644.2" stroke="#ff0000" stroke-width="1.8"/><path d="M866.0,629.0 L874.0,637.0 M874.0,629.0 L866.0,637.0" stroke="#ff0000" stroke-width="1.8"/><path d="M915.3,637.2 L923.3,645.2 M923.3,637.2 L915.3,645.2" stroke="#ff0000" stroke-width="1.8"/><path d="M964.6,651.5 L972.6,659.5 M972.6,651.5 L964.6,659.5" stroke="#ff0000" stroke-width="1.8"/><path d="M1013.8,651.0 L1021.8,659.0 M1021.8,651.0 L1013.8,659.0" stroke="#ff0000" stroke-width="1.8"/><path d="M1112.4,659.6 L1120.4,667.6 M1120.4,659.6 L1112.4,667.6" stroke="#ff0000" stroke-width="1.8"/><path d="M767.5,413.3 L775.5,421.3 M775.5,413.3 L767.5,421.3" stroke="#0000ff" stroke-width="1.8"/><path d="M816.8,448.9 L824.8,456.9 M824.8,448.9 L816.8,456.9" stroke="#0000ff" stroke-width="1.8"/><path d="M866.0,498.3 L874.0,506.3 M874.0,498.3 L866.0,506.3" stroke="#0000ff" stroke-width="1.8"/><path d="M915.3,532.6 L923.3,540.6 M923.3,532.6 L915.3,540.6" stroke="#0000ff" stroke-width="1.8"/><path d="M964.6,546.4 L972.6,554.4 M972.6,546.4 L964.6,554.4" stroke="#0000ff" stroke-width="1.8"/><path d="M1013.8,558.4 L1021.8,566.4 M1021.8,558.4 L1013.8,566.4" stroke="#0000ff" stroke-width="1.8"/><path d="M1112.4,572.6 L1120.4,580.6 M1120.4,572.6 L1112.4,580.6" stroke="#0000ff" stroke-width="1.8"/><path d="M767.5,659.0 L775.5,667.0 M775.5,659.0 L767.5,667.0" stroke="#008000" stroke-width="1.8"/><path d="M816.8,629.7 L824.8,637.7 M824.8,629.7 L816.8,637.7" stroke="#008000" stroke-width="1.8"/><path d="M866.0,588.8 L874.0,596.8 M874.0,588.8 L866.0,596.8" stroke="#008000" stroke-width="1.8"/><path d="M915.3,546.3 L923.3,554.3 M923.3,546.3 L915.3,554.3" stroke="#008000" stroke-width="1.8"/><path d="M964.6,519.4 L972.6,527.4 M972.6,519.4 L964.6,527.4" stroke="#008000" stroke-width="1.8"/><path d="M1013.8,507.7 L1021.8,515.7 M1021.8,507.7 L1013.8,515.7" stroke="#008000" stroke-width="1.8"/><path d="M1112.4,484.9 L1120.4,492.9 M1120.4,484.9 L1112.4,492.9" stroke="#008000" stroke-width="1.8"/></g><rect x="754.4" y="405.8" width="380.9" height="269.8" fill="none" stroke="#262626" stroke-width="1"/><line x1="750.9" y1="663.30" x2="754.4" y2="663.30" stroke="#262626" stroke-width="1"/><text x="745.4" y="667.50" font-size="12.3" text-anchor="end" fill="#262626" font-family="Liberation Sans">0</text><line x1="750.9" y1="611.00" x2="754.4" y2="611.00" stroke="#262626" stroke-width="1"/><text x="745.4" y="615.20" font-size="12.3" text-anchor="end" fill="#262626" font-family="Liberation Sans">50</text><line x1="750.9" y1="558.70" x2="754.4" y2="558.70" stroke="#262626" stroke-width="1"/><text x="745.4" y="562.90" font-size="12.3" text-anchor="end" fill="#262626" font-family="Liberation Sans">100</text><line x1="750.9" y1="506.40" x2="754.4" y2="506.40" stroke="#262626" stroke-width="1"/><text x="745.4" y="510.60" font-size="12.3" text-anchor="end" fill="#262626" font-family="Liberation Sans">150</text><line x1="750.9" y1="454.10" x2="754.4" y2="454.10" stroke="#262626" stroke-width="1"/><text x="745.4" y="458.30" font-size="12.3" text-anchor="end" fill="#262626" font-family="Liberation Sans">200</text><line x1="771.50" y1="675.6" x2="771.50" y2="679.1" stroke="#262626" stroke-width="1"/><text x="771.50" y="693.0" font-size="12.3" text-anchor="middle" fill="#262626" font-family="Liberation Sans">0.0</text><line x1="819.80" y1="675.6" x2="819.80" y2="679.1" stroke="#262626" stroke-width="1"/><text x="819.80" y="693.0" font-size="12.3" text-anchor="middle" fill="#262626" font-family="Liberation Sans">0.5</text><line x1="868.10" y1="675.6" x2="868.10" y2="679.1" stroke="#262626" stroke-width="1"/><text x="868.10" y="693.0" font-size="12.3" text-anchor="middle" fill="#262626" font-family="Liberation Sans">1.0</text><line x1="916.40" y1="675.6" x2="916.40" y2="679.1" stroke="#262626" stroke-width="1"/><text x="916.40" y="693.0" font-size="12.3" text-anchor="middle" fill="#262626" font-family="Liberation Sans">1.5</text><line x1="964.70" y1="675.6" x2="964.70" y2="679.1" stroke="#262626" stroke-width="1"/><text x="964.70" y="693.0" font-size="12.3" text-anchor="middle" fill="#262626" font-family="Liberation Sans">2.0</text><line x1="1013.00" y1="675.6" x2="1013.00" y2="679.1" stroke="#262626" stroke-width="1"/><text x="1013.00" y="693.0" font-size="12.3" text-anchor="middle" fill="#262626" font-family="Liberation Sans">2.5</text><line x1="1061.30" y1="675.6" x2="1061.30" y2="679.1" stroke="#262626" stroke-width="1"/><text x="1061.30" y="693.0" font-size="12.3" text-anchor="middle" fill="#262626" font-family="Liberation Sans">3.0</text><line x1="1109.60" y1="675.6" x2="1109.60" y2="679.1" stroke="#262626" stroke-width="1"/><text x="1109.60" y="693.0" font-size="12.3" text-anchor="middle" fill="#262626" font-family="Liberation Sans">3.5</text><text x="944.85" y="708.3" font-size="12.5" text-anchor="middle" fill="#262626" font-family="Liberation Sans">Time [days]</text><rect x="1024.5" y="410.5" width="104" height="54.5" rx="2" fill="#ffffff" fill-opacity="0.8" stroke="#d8d8d8" stroke-width="1"/><line x1="1028" y1="420.4" x2="1052" y2="420.4" stroke="#0000ff" stroke-width="1.6"/><text x="1059.5" y="424.7" font-size="12.3" fill="#262626" font-family="Liberation Sans">Susceptible</text><line x1="1028" y1="437.4" x2="1052" y2="437.4" stroke="#ff0000" stroke-width="1.6"/><text x="1059.5" y="441.7" font-size="12.3" fill="#262626" font-family="Liberation Sans">Infective</text><line x1="1028" y1="454.4" x2="1052" y2="454.4" stroke="#008000" stroke-width="1.6"/><text x="1059.5" y="458.7" font-size="12.3" fill="#262626" font-family="Liberation Sans">Removed</text><rect x="754.1" y="727.1" width="274.9" height="8.5" fill="#d3d3d3"/><rect x="754.1" y="727.1" width="97.8" height="8.5" fill="#1f77b4"/><line x1="809" y1="727.1" x2="809" y2="735.6" stroke="#d62728" stroke-width="1.2"/><circle cx="851.9" cy="731.35" r="5.5" fill="#ffffff" stroke="#c8c8c8" stroke-width="0.8"/><text x="748" y="734.9" font-size="12.5" font-style="italic" text-anchor="end" fill="#262626" font-family="Liberation Serif">β</text><text x="1035" y="734.6999999999999" font-size="12.3" fill="#262626" font-family="Liberation Sans">0.01782</text><rect x="754.1" y="748.4" width="274.9" height="8.5" fill="#d3d3d3"/><rect x="754.1" y="748.4" width="158.9" height="8.5" fill="#1f77b4"/><line x1="765" y1="748.4" x2="765" y2="756.9" stroke="#d62728" stroke-width="1.2"/><circle cx="913" cy="752.65" r="5.5" fill="#ffffff" stroke="#c8c8c8" stroke-width="0.8"/><text x="748" y="756.5" font-size="12.5" font-style="italic" text-anchor="end" fill="#262626" font-family="Liberation Serif">γ</text><text x="1035" y="756.3" font-size="12.3" fill="#262626" font-family="Liberation Sans">2.886</text><rect x="1081.9" y="731.3" width="46.5" height="21.7" fill="#d9d9d9" stroke="#333" stroke-width="1"/><text x="1105.2" y="746.3" font-size="12.3" text-anchor="middle" fill="#262626" font-family="Liberation Sans">Reset</text><path d="M609.8,807.9 H631.3 V786" fill="none" stroke="#9a9a9a" stroke-width="1"/><path d="M609.8,807 V785 H630.3" fill="none" stroke="#fafafa" stroke-width="0.8"/><path d="M632,807.9 H654.4 V786" fill="none" stroke="#9a9a9a" stroke-width="1"/><path d="M632,807 V785 H653.4" fill="none" stroke="#fafafa" stroke-width="0.8"/><path d="M655,807.9 H677.6 V786" fill="none" stroke="#9a9a9a" stroke-width="1"/><path d="M655,807 V785 H676.6" fill="none" stroke="#fafafa" stroke-width="0.8"/><path d="M686,807.9 H708.4 V786" fill="none" stroke="#9a9a9a" stroke-width="1"/><path d="M686,807 V785 H707.4" fill="none" stroke="#fafafa" stroke-width="0.8"/><path d="M709,807.9 H733.3 V786" fill="none" stroke="#9a9a9a" stroke-width="1"/><path d="M709,807 V785 H732.3" fill="none" stroke="#fafafa" stroke-width="0.8"/><path d="M734,807.9 H756.5 V786" fill="none" stroke="#9a9a9a" stroke-width="1"/><path d="M734,807 V785 H755.5" fill="none" stroke="#fafafa" stroke-width="0.8"/><path d="M763,807.9 H786.5 V786" fill="none" stroke="#9a9a9a" stroke-width="1"/><path d="M763,807 V785 H785.5" fill="none" stroke="#fafafa" stroke-width="0.8"/><line x1="681.7" y1="787" x2="681.7" y2="806" stroke="#c8c8c8"/><line x1="760.3" y1="787" x2="760.3" y2="806" stroke="#c8c8c8"/><path d="M612.6,798.8 L620.4,792.5 L628.2,798.8" fill="none" stroke="#000" stroke-width="1.6"/><rect x="624.3" y="792" width="2.2" height="4.6" fill="#000"/><path d="M615,799.2 L620.4,795 L625.9,799.2 V804.7 H622.2 V800.8 H618.6 V804.7 H615 Z" fill="#000"/><path d="M645,790.8 L638.6,797.2 L645,803.6 M639.5,797.2 H651" fill="none" stroke="#808080" stroke-width="3.2" stroke-linejoin="miter"/><path d="M664.8,790.8 L671.2,797.2 L664.8,803.6 M670.3,797.2 H659" fill="none" stroke="#808080" stroke-width="3.2" stroke-linejoin="miter"/><path d="M697.2,790 V804.5 M690,797.2 H704.5" stroke="#000" stroke-width="2.4"/><path d="M697.2,788 L693.2,792 H701.2 Z M697.2,806.4 L693.2,802.4 H701.2 Z M688.1,797.2 L692.1,793.2 V801.2 Z M706.3,797.2 L702.3,793.2 V801.2 Z" fill="#000"/><circle cx="720.4" cy="795.6" r="6.1" fill="none" stroke="#000" stroke-width="2.3"/><path d="M724.6,799.8 L729.4,804.8" stroke="#000" stroke-width="2.8" stroke-linecap="round"/><path d="M737.6,792.9 H753 M737.6,798 H753 M737.6,803 H753" stroke="#000" stroke-width="1.3"/><rect x="739.6" y="791.1" width="3.7" height="3.7" fill="#000"/><rect x="746.9" y="796.2" width="3.7" height="3.7" fill="#000"/><rect x="741.8" y="801.2" width="3.7" height="3.7" fill="#000"/><path d="M768.6,790.8 H779.5 L782.2,793.5 V804 H768.6 Z" fill="none" stroke="#000" stroke-width="1.9"/><rect x="770.5" y="790.5" width="7.5" height="5.5" fill="#000"/><rect x="774.3" y="791.5" width="2" height="3.2" fill="#fff"/><rect x="770.8" y="798.6" width="9.2" height="4.6" fill="none" stroke="#000" stroke-width="1.5"/></svg>
</body></html>
